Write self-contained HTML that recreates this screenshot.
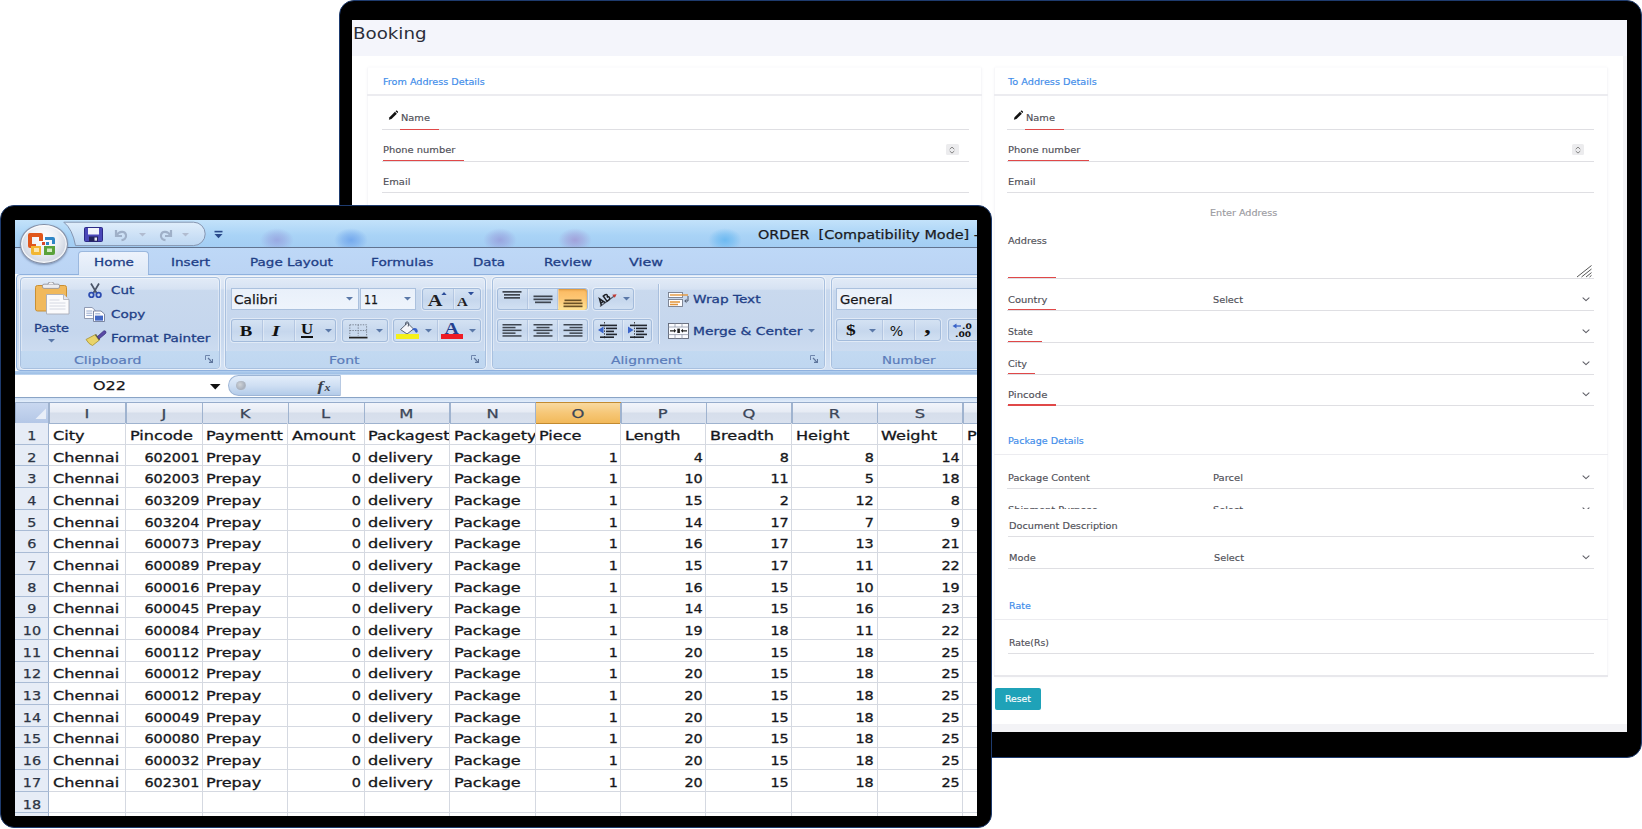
<!DOCTYPE html>
<html lang="en"><head><meta charset="utf-8"><title>Booking / Order import</title>
<style>
html,body{margin:0;padding:0}
body{width:1642px;height:829px;position:relative;overflow:hidden;background:#fff}
body div,body span.t,body svg{position:absolute;box-sizing:border-box}
span.t{white-space:pre;display:block}
</style></head>
<body>
<!-- booking monitor -->
<div style="left:338.8px;top:0.3px;width:1302.9px;height:757.7px;background:#000;border-radius:15px;border:1.8px solid #1e3b6e;"></div>
<div style="left:352px;top:20px;width:1275px;height:712px;background:#f3f3f6;"></div>
<div style="left:352px;top:20px;width:1271px;height:704px;background:#fff;"></div>
<div style="left:352px;top:509.5px;width:1275px;height:214.5px;background:#fff;"></div>
<div style="left:352px;top:20px;width:1275px;height:35.5px;background:#f4f5fb;"></div>
<span class="t" style="left:353.20px;top:22.99px;font:15.8px/21px 'DejaVu Sans','Liberation Sans',sans-serif;color:#2b2f3a;transform:scaleX(1.154);transform-origin:0 50%;">Booking</span>
<div style="left:367px;top:67px;width:614.5px;height:353px;background:#fff;border:1px solid #f7f7f9;border-top-color:#fcfcfd;border-radius:2px;box-shadow:0 0 3px rgba(60,60,90,.04);"></div>
<div style="left:367px;top:94.3px;width:614.5px;height:1.4px;background:#ececf0;"></div>
<span class="t" style="left:383.00px;top:75.67px;font:9.4px/12px 'DejaVu Sans','Liberation Sans',sans-serif;color:#3d8bea;transform:scaleX(1.027);transform-origin:0 50%;-webkit-text-stroke:.15px #3d8bea;">From Address Details</span>
<svg style="left:388.3px;top:109.6px;" width="10.4" height="10.4" viewBox="-0.5 -0.8 13 13"><path d="M0.6 11.4 L1.4 8.2 L8.2 1.4 L10.6 3.8 L3.8 10.6 Z" fill="#111"/><path d="M8.9 0.7 L9.7 -0.1 Q10.3 -0.5 10.9 0.1 L11.9 1.1 Q12.5 1.7 11.9 2.3 L11.3 3.1 Z" fill="#111"/></svg>
<span class="t" style="left:401.00px;top:111.67px;font:9.4px/12px 'DejaVu Sans','Liberation Sans',sans-serif;color:#505058;transform:scaleX(1.046);transform-origin:0 50%;-webkit-text-stroke:.15px #505058;">Name</span>
<div style="left:382px;top:129.1px;width:586.5px;height:1.2px;background:#dfdfe3;"></div>
<div style="left:400px;top:128.5px;width:39px;height:1.4px;background:#e04848;"></div>
<span class="t" style="left:383.00px;top:143.67px;font:9.4px/12px 'DejaVu Sans','Liberation Sans',sans-serif;color:#505058;transform:scaleX(1.054);transform-origin:0 50%;-webkit-text-stroke:.15px #505058;">Phone number</span>
<div style="left:382px;top:160.7px;width:586.5px;height:1.2px;background:#dfdfe3;"></div>
<div style="left:383px;top:160.1px;width:81px;height:1.4px;background:#e04848;"></div>
<div style="left:946px;top:144px;width:12.5px;height:11px;background:#ececee;border-radius:1.5px;"></div>
<svg style="left:949.2px;top:145.6px;" width="6" height="8" viewBox="0 0 6 8"><path d="M1 2.9 L3 1.1 L5 2.9 M1 5.3 L3 7.1 L5 5.3" fill="none" stroke="#777" stroke-width=".9" stroke-linecap="round" stroke-linejoin="round"/></svg>
<span class="t" style="left:383.00px;top:175.67px;font:9.4px/12px 'DejaVu Sans','Liberation Sans',sans-serif;color:#505058;transform:scaleX(1.054);transform-origin:0 50%;-webkit-text-stroke:.15px #505058;">Email</span>
<div style="left:382px;top:192.2px;width:586.5px;height:1.2px;background:#dfdfe3;"></div>
<div style="left:994px;top:67px;width:614px;height:609.5px;background:#fff;border:1px solid #f7f7f9;border-top-color:#fcfcfd;border-radius:2px;box-shadow:0 0 3px rgba(60,60,90,.04);"></div>
<div style="left:994px;top:94.3px;width:614px;height:1.4px;background:#ececf0;"></div>
<span class="t" style="left:1008.00px;top:75.67px;font:9.4px/12px 'DejaVu Sans','Liberation Sans',sans-serif;color:#3d8bea;transform:scaleX(1.036);transform-origin:0 50%;-webkit-text-stroke:.15px #3d8bea;">To Address Details</span>
<svg style="left:1013.3px;top:109.6px;" width="10.4" height="10.4" viewBox="-0.5 -0.8 13 13"><path d="M0.6 11.4 L1.4 8.2 L8.2 1.4 L10.6 3.8 L3.8 10.6 Z" fill="#111"/><path d="M8.9 0.7 L9.7 -0.1 Q10.3 -0.5 10.9 0.1 L11.9 1.1 Q12.5 1.7 11.9 2.3 L11.3 3.1 Z" fill="#111"/></svg>
<span class="t" style="left:1026.00px;top:111.67px;font:9.4px/12px 'DejaVu Sans','Liberation Sans',sans-serif;color:#505058;transform:scaleX(1.046);transform-origin:0 50%;-webkit-text-stroke:.15px #505058;">Name</span>
<div style="left:1007px;top:129.1px;width:587px;height:1.2px;background:#dfdfe3;"></div>
<div style="left:1025px;top:128.5px;width:39px;height:1.4px;background:#e04848;"></div>
<span class="t" style="left:1008.00px;top:143.67px;font:9.4px/12px 'DejaVu Sans','Liberation Sans',sans-serif;color:#505058;transform:scaleX(1.054);transform-origin:0 50%;-webkit-text-stroke:.15px #505058;">Phone number</span>
<div style="left:1007px;top:160.7px;width:587px;height:1.2px;background:#dfdfe3;"></div>
<div style="left:1008px;top:160.1px;width:81px;height:1.4px;background:#e04848;"></div>
<div style="left:1571.5px;top:144px;width:12.5px;height:11px;background:#ececee;border-radius:1.5px;"></div>
<svg style="left:1574.7px;top:145.6px;" width="6" height="8" viewBox="0 0 6 8"><path d="M1 2.9 L3 1.1 L5 2.9 M1 5.3 L3 7.1 L5 5.3" fill="none" stroke="#777" stroke-width=".9" stroke-linecap="round" stroke-linejoin="round"/></svg>
<span class="t" style="left:1008.00px;top:175.67px;font:9.4px/12px 'DejaVu Sans','Liberation Sans',sans-serif;color:#505058;transform:scaleX(1.054);transform-origin:0 50%;-webkit-text-stroke:.15px #505058;">Email</span>
<div style="left:1007px;top:192.2px;width:587px;height:1.2px;background:#dfdfe3;"></div>
<span class="t" style="left:1209.50px;top:207.17px;font:9.4px/12px 'DejaVu Sans','Liberation Sans',sans-serif;color:#9a9aa0;transform:scaleX(1.028);transform-origin:0 50%;-webkit-text-stroke:.15px #9a9aa0;">Enter Address</span>
<span class="t" style="left:1008.00px;top:234.67px;font:9.4px/12px 'DejaVu Sans','Liberation Sans',sans-serif;color:#505058;transform:scaleX(1.042);transform-origin:0 50%;-webkit-text-stroke:.15px #505058;">Address</span>
<div style="left:1007px;top:277.6px;width:587px;height:1.2px;background:#dfdfe3;"></div>
<div style="left:1008px;top:276.7px;width:48px;height:1.4px;background:#e04848;"></div>
<svg style="left:1576px;top:264px;" width="17" height="14" viewBox="0 0 17 14"><path d="M1 13 L15.5 1.5 M5.5 13 L15.5 5 M10 13 L15.5 8.6 M13.6 13 L15.5 11.4" stroke="#555" stroke-width="1" fill="none"/></svg>
<span class="t" style="left:1008.00px;top:293.67px;font:9.4px/12px 'DejaVu Sans','Liberation Sans',sans-serif;color:#505058;transform:scaleX(1.058);transform-origin:0 50%;-webkit-text-stroke:.15px #505058;">Country</span>
<span class="t" style="left:1212.50px;top:293.67px;font:9.4px/12px 'DejaVu Sans','Liberation Sans',sans-serif;color:#505058;transform:scaleX(1.035);transform-origin:0 50%;-webkit-text-stroke:.15px #505058;">Select</span>
<div style="left:1007px;top:309.7px;width:587px;height:1.2px;background:#dfdfe3;"></div>
<div style="left:1008px;top:308.9px;width:48px;height:1.4px;background:#e04848;"></div>
<svg style="left:1582.4px;top:296.8px;" width="8" height="5" viewBox="0 0 8 5"><path d="M1 0.9 L4 3.7 L7 0.9" fill="none" stroke="#5e5e66" stroke-width="1.05" stroke-linecap="round" stroke-linejoin="round"/></svg>
<span class="t" style="left:1008.00px;top:325.67px;font:9.4px/12px 'DejaVu Sans','Liberation Sans',sans-serif;color:#505058;-webkit-text-stroke:.15px #505058;">State</span>
<div style="left:1007px;top:341.7px;width:587px;height:1.2px;background:#dfdfe3;"></div>
<div style="left:1008px;top:340.9px;width:33.8px;height:1.4px;background:#e04848;"></div>
<svg style="left:1582.4px;top:328.8px;" width="8" height="5" viewBox="0 0 8 5"><path d="M1 0.9 L4 3.7 L7 0.9" fill="none" stroke="#5e5e66" stroke-width="1.05" stroke-linecap="round" stroke-linejoin="round"/></svg>
<span class="t" style="left:1008.00px;top:357.67px;font:9.4px/12px 'DejaVu Sans','Liberation Sans',sans-serif;color:#505058;transform:scaleX(1.031);transform-origin:0 50%;-webkit-text-stroke:.15px #505058;">City</span>
<div style="left:1007px;top:373.7px;width:587px;height:1.2px;background:#dfdfe3;"></div>
<div style="left:1008px;top:372.9px;width:27px;height:1.4px;background:#e04848;"></div>
<svg style="left:1582.4px;top:360.8px;" width="8" height="5" viewBox="0 0 8 5"><path d="M1 0.9 L4 3.7 L7 0.9" fill="none" stroke="#5e5e66" stroke-width="1.05" stroke-linecap="round" stroke-linejoin="round"/></svg>
<span class="t" style="left:1008.00px;top:389.17px;font:9.4px/12px 'DejaVu Sans','Liberation Sans',sans-serif;color:#505058;transform:scaleX(1.076);transform-origin:0 50%;-webkit-text-stroke:.15px #505058;">Pincode</span>
<div style="left:1007px;top:405.2px;width:587px;height:1.2px;background:#dfdfe3;"></div>
<div style="left:1008px;top:404.4px;width:48px;height:1.4px;background:#e04848;"></div>
<svg style="left:1582.4px;top:392.3px;" width="8" height="5" viewBox="0 0 8 5"><path d="M1 0.9 L4 3.7 L7 0.9" fill="none" stroke="#5e5e66" stroke-width="1.05" stroke-linecap="round" stroke-linejoin="round"/></svg>
<span class="t" style="left:1008.00px;top:435.47px;font:9.4px/12px 'DejaVu Sans','Liberation Sans',sans-serif;color:#3d8bea;transform:scaleX(1.020);transform-origin:0 50%;-webkit-text-stroke:.15px #3d8bea;">Package Details</span>
<div style="left:994px;top:453.9px;width:614px;height:1.4px;background:#ececf0;"></div>
<span class="t" style="left:1008.00px;top:472.17px;font:9.4px/12px 'DejaVu Sans','Liberation Sans',sans-serif;color:#505058;transform:scaleX(1.034);transform-origin:0 50%;-webkit-text-stroke:.15px #505058;">Package Content</span>
<span class="t" style="left:1212.50px;top:472.17px;font:9.4px/12px 'DejaVu Sans','Liberation Sans',sans-serif;color:#505058;transform:scaleX(1.063);transform-origin:0 50%;-webkit-text-stroke:.15px #505058;">Parcel</span>
<div style="left:1007px;top:488.2px;width:587px;height:1.2px;background:#dfdfe3;"></div>
<svg style="left:1582.4px;top:475.3px;" width="8" height="5" viewBox="0 0 8 5"><path d="M1 0.9 L4 3.7 L7 0.9" fill="none" stroke="#5e5e66" stroke-width="1.05" stroke-linecap="round" stroke-linejoin="round"/></svg>
<div style="left:1000px;top:500px;width:600px;height:8.8px;overflow:hidden">
<span class="t" style="left:8.00px;top:3.87px;font:9.4px/12px 'DejaVu Sans','Liberation Sans',sans-serif;color:#505058;transform:scaleX(1.049);transform-origin:0 50%;-webkit-text-stroke:.15px #505058;">Shipment Purpose</span>
<span class="t" style="left:212.50px;top:3.87px;font:9.4px/12px 'DejaVu Sans','Liberation Sans',sans-serif;color:#505058;transform:scaleX(1.035);transform-origin:0 50%;-webkit-text-stroke:.15px #505058;">Select</span>
<svg style="left:582.4px;top:7px;" width="8" height="5" viewBox="0 0 8 5"><path d="M1 0.9 L4 3.7 L7 0.9" fill="none" stroke="#5e5e66" stroke-width="1.05" stroke-linecap="round" stroke-linejoin="round"/></svg>
</div>
<span class="t" style="left:1009.00px;top:519.67px;font:9.4px/12px 'DejaVu Sans','Liberation Sans',sans-serif;color:#505058;transform:scaleX(1.036);transform-origin:0 50%;-webkit-text-stroke:.15px #505058;">Document Description</span>
<div style="left:1008px;top:535.7px;width:586px;height:1.2px;background:#dfdfe3;"></div>
<span class="t" style="left:1009.00px;top:552.17px;font:9.4px/12px 'DejaVu Sans','Liberation Sans',sans-serif;color:#505058;transform:scaleX(1.046);transform-origin:0 50%;-webkit-text-stroke:.15px #505058;">Mode</span>
<span class="t" style="left:1213.50px;top:552.17px;font:9.4px/12px 'DejaVu Sans','Liberation Sans',sans-serif;color:#505058;transform:scaleX(1.035);transform-origin:0 50%;-webkit-text-stroke:.15px #505058;">Select</span>
<div style="left:1008px;top:568.2px;width:586px;height:1.2px;background:#dfdfe3;"></div>
<svg style="left:1582.4px;top:555.3px;" width="8" height="5" viewBox="0 0 8 5"><path d="M1 0.9 L4 3.7 L7 0.9" fill="none" stroke="#5e5e66" stroke-width="1.05" stroke-linecap="round" stroke-linejoin="round"/></svg>
<span class="t" style="left:1009.00px;top:600.17px;font:9.4px/12px 'DejaVu Sans','Liberation Sans',sans-serif;color:#3d8bea;transform:scaleX(1.011);transform-origin:0 50%;-webkit-text-stroke:.15px #3d8bea;">Rate</span>
<div style="left:994px;top:618.6px;width:614px;height:1.4px;background:#ececf0;"></div>
<span class="t" style="left:1009.00px;top:637.17px;font:9.4px/12px 'DejaVu Sans','Liberation Sans',sans-serif;color:#505058;transform:scaleX(0.992);transform-origin:0 50%;-webkit-text-stroke:.15px #505058;">Rate(Rs)</span>
<div style="left:1008px;top:653.2px;width:586px;height:1.2px;background:#dfdfe3;"></div>
<div style="left:994px;top:675.2px;width:614px;height:1.6px;background:#e8e8ec;"></div>
<div style="left:994.5px;top:688px;width:46px;height:22px;background:#1fa2b8;border-radius:2px;"></div>
<span class="t" style="left:1005.00px;top:692.97px;font:9.4px/12px 'DejaVu Sans','Liberation Sans',sans-serif;color:#fff;transform:scaleX(0.990);transform-origin:0 50%;-webkit-text-stroke:.15px #fff;">Reset</span>
<!-- excel monitor -->
<div style="left:0.3px;top:205.3px;width:991.4px;height:623.2px;background:#000;border-radius:14px;border:1.8px solid #1e3b6e;"></div>
<div style="left:15px;top:220px;width:962px;height:596px;overflow:hidden;background:#fff">
<div style="left:0px;top:0px;width:962px;height:28px;background:linear-gradient(#c3e2fa,#a9d3f6 55%,#a3cdf3);"></div>
<div style="left:245px;top:8px;width:34px;height:24px;background:radial-gradient(ellipse at center,rgba(150,160,222,.8),rgba(150,160,222,.45) 35%,rgba(150,160,222,0) 70%);"></div>
<div style="left:319px;top:8px;width:34px;height:24px;background:radial-gradient(ellipse at center,rgba(105,160,235,.8),rgba(105,160,235,.45) 35%,rgba(105,160,235,0) 70%);"></div>
<div style="left:468px;top:8px;width:34px;height:24px;background:radial-gradient(ellipse at center,rgba(150,155,218,.8),rgba(150,155,218,.45) 35%,rgba(150,155,218,0) 70%);"></div>
<div style="left:543px;top:8px;width:34px;height:24px;background:radial-gradient(ellipse at center,rgba(160,150,212,.8),rgba(160,150,212,.45) 35%,rgba(160,150,212,0) 70%);"></div>
<div style="left:693px;top:8px;width:34px;height:24px;background:radial-gradient(ellipse at center,rgba(95,180,240,.8),rgba(95,180,240,.45) 35%,rgba(95,180,240,0) 70%);"></div>
<div style="left:0px;top:27.2px;width:962px;height:1.2px;background:#61738f;"></div>
<div style="left:0px;top:28.4px;width:962px;height:26px;background:linear-gradient(#bed8f7,#bbd4f4);"></div>
<svg style="left:45px;top:0px;" width="150" height="28" viewBox="0 0 150 28"><defs><linearGradient id="qg" x1="0" y1="0" x2="0" y2="1"><stop offset="0" stop-color="#e6f0fb" stop-opacity=".85"/><stop offset="1" stop-color="#c3d9f2" stop-opacity=".85"/></linearGradient></defs><path d="M3.8 2.2 Q12.5 9 15.5 25.6 H133.5 A11.7 11.7 0 0 0 133.5 2.2 Z" fill="url(#qg)" stroke="#8595b0" stroke-width="1"/></svg>
<div style="left:4.5px;top:3.7px;width:48px;height:40.6px;border-radius:50%;background:radial-gradient(ellipse at 50% 35%,#ffffff 0,#eceff5 42%,#c9d0dd 78%,#a9b3c6 100%);border:1.4px solid #8590a6;box-shadow:0 1px 2px rgba(60,80,120,.5),inset 0 0 0 1.5px rgba(255,255,255,.7);"></div>
<svg style="left:12.5px;top:11px;" width="32" height="26" viewBox="0 0 32 26"><path d="M2 2 h11 a2 2 0 0 1 2 2 v6 h-4 v-4 h-7 v7 h4 v4 h-6 a2 2 0 0 1 -2 -2 v-11 a2 2 0 0 1 2 -2z" fill="#e0561b"/><path d="M17 6 h8 a2 2 0 0 1 2 2 v5 h-3 v-4 h-7z" fill="#2f86c6"/><rect x="14" y="11" width="3" height="3" fill="#d9482b"/><rect x="18" y="11" width="3" height="3" fill="#2f86c6"/><path d="M3 15 h10 v9 h-8 a2 2 0 0 1 -2 -2z" fill="#f2b632"/><path d="M6 17 h5 v4 h-5z" fill="#fbe6ae"/><path d="M16 15 h11 v7 a2 2 0 0 1 -2 2 h-9z" fill="#5aa23a"/><path d="M19 17.5 h5 v3.5 h-5z" fill="#d3ebc2"/></svg>
<svg style="left:69px;top:7px;" width="19" height="15" viewBox="0 0 19 15"><rect x="0.5" y="0.5" width="18" height="14" rx="1" fill="#4a47b8" stroke="#2c2a86"/><rect x="4" y="1" width="11" height="6.5" fill="#f2f4fb"/><rect x="5" y="9.5" width="9" height="5" fill="#23235c"/><rect x="10.5" y="10.5" width="2.5" height="3.2" fill="#e8e8f2"/></svg>
<svg style="left:98px;top:7px;" width="17" height="15" viewBox="0 0 17 15"><path d="M3 3 v6 h6 M3.5 8.5 C6 4 12 3.5 13 8 C13.6 11 11 13 8.5 13.2" fill="none" stroke="#9fb0c8" stroke-width="2.2"/></svg>
<svg style="left:142px;top:7px;" width="17" height="15" viewBox="0 0 17 15"><path d="M14 3 v6 h-6 M13.5 8.5 C11 4 5 3.5 4 8 C3.4 11 6 13 8.5 13.2" fill="none" stroke="#9fb0c8" stroke-width="2.2"/></svg>
<svg style="left:123.5px;top:13px;" width="7" height="4" viewBox="0 0 7 4"><path d="M0 0 h7 l-3.5 3.6z" fill="#b1bcd0"/></svg>
<svg style="left:166.5px;top:13px;" width="7" height="4" viewBox="0 0 7 4"><path d="M0 0 h7 l-3.5 3.6z" fill="#b1bcd0"/></svg>
<svg style="left:198.5px;top:9.5px;" width="9" height="9" viewBox="0 0 9 9"><rect x="0.5" y="0.8" width="8" height="1.6" fill="#2a4a8a"/><path d="M0.5 4 h8 l-4 4.2z" fill="#2a4a8a"/></svg>
<span class="t" style="left:743.00px;top:6.04px;font:13px/17px 'DejaVu Sans','Liberation Sans',sans-serif;color:#1b1b1f;transform:scaleX(1.106);transform-origin:0 50%;-webkit-text-stroke:.25px #16161a;">ORDER  [Compatibility Mode] -</span>
<div style="left:63px;top:30.6px;width:71px;height:25px;border:1px solid #9bb8de;border-bottom:none;border-radius:4px 4px 0 0;background:linear-gradient(#edf3fc,#e3ecf8 60%,#dde8f6);"></div>
<span class="t" style="left:79.00px;top:35.31px;font:11.2px/15px 'DejaVu Sans','Liberation Sans',sans-serif;color:#1f3f87;transform:scaleX(1.209);transform-origin:0 50%;-webkit-text-stroke:.3px #1f3f87;">Home</span>
<span class="t" style="left:156.00px;top:35.31px;font:11.2px/15px 'DejaVu Sans','Liberation Sans',sans-serif;color:#1f3f87;transform:scaleX(1.214);transform-origin:0 50%;-webkit-text-stroke:.3px #1f3f87;">Insert</span>
<span class="t" style="left:235.00px;top:35.31px;font:11.2px/15px 'DejaVu Sans','Liberation Sans',sans-serif;color:#1f3f87;transform:scaleX(1.207);transform-origin:0 50%;-webkit-text-stroke:.3px #1f3f87;">Page Layout</span>
<span class="t" style="left:355.50px;top:35.31px;font:11.2px/15px 'DejaVu Sans','Liberation Sans',sans-serif;color:#1f3f87;transform:scaleX(1.223);transform-origin:0 50%;-webkit-text-stroke:.3px #1f3f87;">Formulas</span>
<span class="t" style="left:458.00px;top:35.31px;font:11.2px/15px 'DejaVu Sans','Liberation Sans',sans-serif;color:#1f3f87;transform:scaleX(1.197);transform-origin:0 50%;-webkit-text-stroke:.3px #1f3f87;">Data</span>
<span class="t" style="left:529.00px;top:35.31px;font:11.2px/15px 'DejaVu Sans','Liberation Sans',sans-serif;color:#1f3f87;transform:scaleX(1.201);transform-origin:0 50%;-webkit-text-stroke:.3px #1f3f87;">Review</span>
<span class="t" style="left:614.00px;top:35.31px;font:11.2px/15px 'DejaVu Sans','Liberation Sans',sans-serif;color:#1f3f87;transform:scaleX(1.279);transform-origin:0 50%;-webkit-text-stroke:.3px #1f3f87;">View</span>
<div style="left:0.5px;top:54.2px;width:965px;height:96.6px;border:1px solid #8fb1de;border-radius:4px;background:linear-gradient(#e1eaf6 0,#d9e4f3 14%,#c9d9ee 16%,#c5d6ed 60%,#d3e1f3 100%);"></div>
<div style="left:64px;top:54px;width:69.4px;height:1.6px;background:#dde8f6;"></div>
<div style="left:4.5px;top:57px;width:200px;height:92px;border:1px solid #a8c0df;border-radius:4px;box-shadow:0 0 0 1px rgba(255,255,255,.55),inset 0 0 0 1px rgba(255,255,255,.35);background:linear-gradient(rgba(226,235,247,.9) 0,rgba(214,226,243,.8) 12%,rgba(201,217,238,0) 14%);overflow:hidden;"><div style="left:0;top:72.5px;width:100%;height:19px;background:linear-gradient(#c2d9f1,#bfd6f0)"></div></div>
<span class="t" style="left:59.40px;top:132.61px;font:11.2px/15px 'DejaVu Sans','Liberation Sans',sans-serif;color:#5b7cba;transform:scaleX(1.264);transform-origin:0 50%;-webkit-text-stroke:.2px #5b7cba;">Clipboard</span>
<svg style="left:190px;top:135px;" width="8" height="8" viewBox="0 0 8 8"><path d="M0.5 5 V0.5 H5" fill="none" stroke="#6f86ad" stroke-width="1"/><path d="M3 3 L7.5 7.5 M7.5 4 V7.5 H4" fill="none" stroke="#5f769d" stroke-width="1.3"/></svg>
<div style="left:210px;top:57px;width:260.6px;height:92px;border:1px solid #a8c0df;border-radius:4px;box-shadow:0 0 0 1px rgba(255,255,255,.55),inset 0 0 0 1px rgba(255,255,255,.35);background:linear-gradient(rgba(226,235,247,.9) 0,rgba(214,226,243,.8) 12%,rgba(201,217,238,0) 14%);overflow:hidden;"><div style="left:0;top:72.5px;width:100%;height:19px;background:linear-gradient(#c2d9f1,#bfd6f0)"></div></div>
<span class="t" style="left:313.80px;top:132.61px;font:11.2px/15px 'DejaVu Sans','Liberation Sans',sans-serif;color:#5b7cba;transform:scaleX(1.255);transform-origin:0 50%;-webkit-text-stroke:.2px #5b7cba;">Font</span>
<svg style="left:456.1px;top:135px;" width="8" height="8" viewBox="0 0 8 8"><path d="M0.5 5 V0.5 H5" fill="none" stroke="#6f86ad" stroke-width="1"/><path d="M3 3 L7.5 7.5 M7.5 4 V7.5 H4" fill="none" stroke="#5f769d" stroke-width="1.3"/></svg>
<div style="left:477px;top:57px;width:332.5px;height:92px;border:1px solid #a8c0df;border-radius:4px;box-shadow:0 0 0 1px rgba(255,255,255,.55),inset 0 0 0 1px rgba(255,255,255,.35);background:linear-gradient(rgba(226,235,247,.9) 0,rgba(214,226,243,.8) 12%,rgba(201,217,238,0) 14%);overflow:hidden;"><div style="left:0;top:72.5px;width:100%;height:19px;background:linear-gradient(#c2d9f1,#bfd6f0)"></div></div>
<span class="t" style="left:596.00px;top:132.61px;font:11.2px/15px 'DejaVu Sans','Liberation Sans',sans-serif;color:#5b7cba;transform:scaleX(1.237);transform-origin:0 50%;-webkit-text-stroke:.2px #5b7cba;">Alignment</span>
<svg style="left:795px;top:135px;" width="8" height="8" viewBox="0 0 8 8"><path d="M0.5 5 V0.5 H5" fill="none" stroke="#6f86ad" stroke-width="1"/><path d="M3 3 L7.5 7.5 M7.5 4 V7.5 H4" fill="none" stroke="#5f769d" stroke-width="1.3"/></svg>
<div style="left:816px;top:57px;width:179px;height:92px;border:1px solid #a8c0df;border-radius:4px;box-shadow:0 0 0 1px rgba(255,255,255,.55),inset 0 0 0 1px rgba(255,255,255,.35);background:linear-gradient(rgba(226,235,247,.9) 0,rgba(214,226,243,.8) 12%,rgba(201,217,238,0) 14%);overflow:hidden;"><div style="left:0;top:72.5px;width:100%;height:19px;background:linear-gradient(#c2d9f1,#bfd6f0)"></div></div>
<span class="t" style="left:867.00px;top:132.61px;font:11.2px/15px 'DejaVu Sans','Liberation Sans',sans-serif;color:#5b7cba;transform:scaleX(1.191);transform-origin:0 50%;-webkit-text-stroke:.2px #5b7cba;">Number</span>
<svg style="left:20px;top:61.5px;" width="35" height="33" viewBox="0 0 35 33"><rect x="0.5" y="3.5" width="31" height="25.5" rx="2" fill="#f1b95c" stroke="#c98f33"/><rect x="7.5" y="2.2" width="17" height="4.2" rx="1.5" fill="#ececf0" stroke="#8c8c94" stroke-width=".8"/><path d="M13 2.2 a3 2.4 0 0 1 6 0" fill="#f4f4f6" stroke="#8c8c94" stroke-width=".9"/><path d="M11.5 12.5 h17 l5.5 5 v14.5 h-22.5z" fill="#fbfbfd" stroke="#a9adb8" stroke-width=".9"/><path d="M28.5 12.5 v5 h5.5" fill="#e4e6ee" stroke="#a9adb8" stroke-width=".8"/><path d="M14.5 18 h10 M14.5 21 h16 M14.5 24 h16 M14.5 27 h16" stroke="#d5d8e2" stroke-width="1"/></svg>
<span class="t" style="left:19.40px;top:100.61px;font:11.2px/15px 'DejaVu Sans','Liberation Sans',sans-serif;color:#1f3f87;transform:scaleX(1.158);transform-origin:0 50%;-webkit-text-stroke:.3px #1f3f87;">Paste</span>
<svg style="left:32.5px;top:119px;" width="7" height="4" viewBox="0 0 7 4"><path d="M0 0 h7 l-3.5 3.6z" fill="#5a78a8"/></svg>
<svg style="left:72.5px;top:62.5px;" width="14" height="15.5" viewBox="0 0 14 15.5"><path d="M3 0.5 L8.6 10 M11 0.5 L5.4 10" stroke="#4a5468" stroke-width="1.7" fill="none"/><circle cx="3.4" cy="12" r="2.3" fill="none" stroke="#2b4bb0" stroke-width="1.8"/><circle cx="10.6" cy="12" r="2.3" fill="none" stroke="#2b4bb0" stroke-width="1.8"/></svg>
<span class="t" style="left:95.60px;top:63.11px;font:11.2px/15px 'DejaVu Sans','Liberation Sans',sans-serif;color:#1f3f87;transform:scaleX(1.201);transform-origin:0 50%;-webkit-text-stroke:.3px #1f3f87;">Cut</span>
<svg style="left:69px;top:86.5px;" width="22" height="15" viewBox="0 0 22 15"><path d="M0.5 0.5 h7.5 l3 2.6 v8.4 h-10.5z" fill="#fdfdff" stroke="#8792ab" stroke-width=".9"/><path d="M2.3 4 h6 M2.3 6.2 h6 M2.3 8.4 h6" stroke="#8aa0c8" stroke-width=".9"/><path d="M9.5 4 h7.5 l3.5 3 v7.5 h-11z" fill="#fdfdff" stroke="#6f7c9a" stroke-width=".9"/><rect x="11" y="8.6" width="8" height="5" fill="#4368c4"/><path d="M11.2 6.8 h5" stroke="#8aa0c8" stroke-width=".9"/></svg>
<span class="t" style="left:95.60px;top:87.01px;font:11.2px/15px 'DejaVu Sans','Liberation Sans',sans-serif;color:#1f3f87;transform:scaleX(1.211);transform-origin:0 50%;-webkit-text-stroke:.3px #1f3f87;">Copy</span>
<svg style="left:70px;top:110px;" width="22" height="16" viewBox="0 0 22 16"><path d="M1 9.5 L10.5 4.5 L14.5 10 L7.5 15.5 Q4 14.5 1 9.5z" fill="#e9d46a" stroke="#a7902f" stroke-width=".8"/><path d="M10.5 4.5 L14.5 10" stroke="#6a6a4a" stroke-width="1.6"/><path d="M12.4 6.6 L18.6 1 Q20.6 0.2 21 2 Q21.2 3.2 20 4 L14 9z" fill="#5a4aa6" stroke="#3a2f7a" stroke-width=".7"/></svg>
<span class="t" style="left:95.60px;top:110.51px;font:11.2px/15px 'DejaVu Sans','Liberation Sans',sans-serif;color:#1f3f87;transform:scaleX(1.209);transform-origin:0 50%;-webkit-text-stroke:.3px #1f3f87;">Format Painter</span>
<div style="left:215.6px;top:68px;width:128.4px;height:22.3px;border:1px solid #abc1de;background:linear-gradient(#e9f0fa,#eef4fc);"></div>
<span class="t" style="left:219.40px;top:70.74px;font:13px/17px 'DejaVu Sans','Liberation Sans',sans-serif;color:#16161a;transform:scaleX(1.051);transform-origin:0 50%;-webkit-text-stroke:.25px #16161a;">Calibri</span>
<svg style="left:331.3px;top:77px;" width="7" height="4" viewBox="0 0 7 4"><path d="M0 0 h7 l-3.5 3.6z" fill="#5a78a8"/></svg>
<div style="left:345.4px;top:68px;width:55.6px;height:22.3px;border:1px solid #abc1de;background:linear-gradient(#e9f0fa,#eef4fc);"></div>
<span class="t" style="left:349.00px;top:70.74px;font:13px/17px 'DejaVu Sans','Liberation Sans',sans-serif;color:#16161a;transform:scaleX(0.846);transform-origin:0 50%;-webkit-text-stroke:.25px #16161a;">11</span>
<svg style="left:389px;top:77px;" width="7" height="4" viewBox="0 0 7 4"><path d="M0 0 h7 l-3.5 3.6z" fill="#5a78a8"/></svg>
<div style="left:407px;top:68px;width:58.6px;height:22.3px;border:1px solid #a3bbdb;border-radius:3px;background:linear-gradient(#d4e2f3,#c6d7ed 55%,#d1e0f2);box-shadow:0 0 0 1px rgba(255,255,255,.45);"></div>
<div style="left:437.5px;top:69px;width:1px;height:20.3px;background:rgba(170,190,220,.7);box-shadow:1px 0 0 rgba(255,255,255,.35);"></div>
<span class="t" style="left:414.46px;top:69.73px;font:17px/22px 'Liberation Serif',serif;font-weight:700;color:#1f1f24;transform:scaleX(1.200);transform-origin:50% 50%;">A</span>
<span class="t" style="left:443.49px;top:74.37px;font:12.5px/16px 'Liberation Serif',serif;font-weight:700;color:#1f1f24;transform:scaleX(1.200);transform-origin:50% 50%;">A</span>
<svg style="left:426px;top:71.5px;" width="6" height="3.4" viewBox="0 0 6 3.4"><path d="M0 3.4 h6 l-3 -3.4z" fill="#2b4d9a"/></svg>
<svg style="left:453px;top:72px;" width="6" height="3.4" viewBox="0 0 6 3.4"><path d="M0 0 h6 l-3 3.4z" fill="#2b4d9a"/></svg>
<div style="left:215.6px;top:99.4px;width:105.4px;height:22.6px;border:1px solid #a3bbdb;border-radius:3px;background:linear-gradient(#d4e2f3,#c6d7ed 55%,#d1e0f2);box-shadow:0 0 0 1px rgba(255,255,255,.45);"></div>
<div style="left:246.5px;top:100.4px;width:1px;height:20.6px;background:rgba(170,190,220,.7);box-shadow:1px 0 0 rgba(255,255,255,.35);"></div>
<div style="left:278.5px;top:100.4px;width:1px;height:20.6px;background:rgba(170,190,220,.7);box-shadow:1px 0 0 rgba(255,255,255,.35);"></div>
<span class="t" style="left:225.60px;top:100.75px;font:15px/20px 'Liberation Serif',serif;font-weight:700;color:#111;transform:scaleX(1.250);transform-origin:50% 50%;">B</span>
<span class="t" style="left:258.08px;top:100.75px;font:15px/20px 'Liberation Serif',serif;font-weight:700;font-style:italic;color:#111;transform:scaleX(1.400);transform-origin:50% 50%;">I</span>
<span class="t" style="left:286.94px;top:101.16px;font:14px/18px 'Liberation Serif',serif;font-weight:700;color:#111;transform:scaleX(1.200);transform-origin:50% 50%;">U</span>
<div style="left:286px;top:116.3px;width:12px;height:1.3px;background:#111;"></div>
<svg style="left:309.5px;top:108.5px;" width="7" height="4" viewBox="0 0 7 4"><path d="M0 0 h7 l-3.5 3.6z" fill="#5a78a8"/></svg>
<div style="left:327px;top:99.4px;width:45.5px;height:22.6px;border:1px solid #a3bbdb;border-radius:3px;background:linear-gradient(#d4e2f3,#c6d7ed 55%,#d1e0f2);box-shadow:0 0 0 1px rgba(255,255,255,.45);"></div>
<svg style="left:334px;top:103.5px;" width="18.5" height="15" viewBox="0 0 18.5 15"><path d="M0.8 0.8 h16.8 v11 M0.8 0.8 v11 M9.2 0.8 v11 M0.8 6.5 h16.8" fill="none" stroke="#7d8796" stroke-width="1" stroke-dasharray="1.4 1.2"/><path d="M0 13.6 h18.5" stroke="#222" stroke-width="1.7"/></svg>
<svg style="left:360.5px;top:108.5px;" width="7" height="4" viewBox="0 0 7 4"><path d="M0 0 h7 l-3.5 3.6z" fill="#5a78a8"/></svg>
<div style="left:377.5px;top:99.4px;width:88.1px;height:22.6px;border:1px solid #a3bbdb;border-radius:3px;background:linear-gradient(#d4e2f3,#c6d7ed 55%,#d1e0f2);box-shadow:0 0 0 1px rgba(255,255,255,.45);"></div>
<div style="left:421.5px;top:100.4px;width:1px;height:20.6px;background:rgba(170,190,220,.7);box-shadow:1px 0 0 rgba(255,255,255,.35);"></div>
<svg style="left:383px;top:101px;" width="21" height="14" viewBox="0 0 21 14"><path d="M2.5 8.5 L9.5 2 L15.5 8 L9 13z" fill="#f6f7fb" stroke="#5b6474" stroke-width="1"/><path d="M7.5 4 Q7 0.5 9.5 0.8 Q11.5 1.2 10.2 5.5" fill="none" stroke="#4c5566" stroke-width="1"/><path d="M15.5 7.2 Q19.5 6.5 19.8 10.5 Q18.5 13 17 10.5 Q16.6 8.6 13.5 9.2z" fill="#3a63c8"/></svg>
<div style="left:381px;top:114.4px;width:22.5px;height:5px;background:#f4f01a;"></div>
<svg style="left:410px;top:108.5px;" width="7" height="4" viewBox="0 0 7 4"><path d="M0 0 h7 l-3.5 3.6z" fill="#5a78a8"/></svg>
<span class="t" style="left:431.22px;top:98.24px;font:16px/21px 'Liberation Serif',serif;font-weight:700;color:#24408f;transform:scaleX(1.250);transform-origin:50% 50%;">A</span>
<div style="left:426px;top:114.4px;width:21.8px;height:5px;background:#ee1c25;"></div>
<svg style="left:454px;top:108.5px;" width="7" height="4" viewBox="0 0 7 4"><path d="M0 0 h7 l-3.5 3.6z" fill="#5a78a8"/></svg>
<div style="left:482px;top:68px;width:90.5px;height:22.3px;border:1px solid #a3bbdb;border-radius:3px;background:linear-gradient(#d4e2f3,#c6d7ed 55%,#d1e0f2);box-shadow:0 0 0 1px rgba(255,255,255,.45);"></div>
<div style="left:542.5px;top:68.5px;width:29.5px;height:21.3px;background:linear-gradient(#fbb961,#fdc774 45%,#ffe596);border-radius:0 3px 3px 0;box-shadow:inset 0 1px 2px rgba(190,120,30,.6);"></div>
<div style="left:511.5px;top:69px;width:1px;height:20.3px;background:rgba(170,190,220,.7);box-shadow:1px 0 0 rgba(255,255,255,.35);"></div>
<div style="left:542px;top:69px;width:1px;height:20.3px;background:rgba(170,190,220,.7);box-shadow:1px 0 0 rgba(255,255,255,.35);"></div>
<svg style="left:487px;top:70px;" width="24" height="20" viewBox="0 0 24 20"><rect x="0.5" y="1" width="19" height="1.7" fill="#3f4650"/><rect x="2" y="4" width="16" height="1.7" fill="#3f4650"/><rect x="2" y="7" width="16" height="1.7" fill="#3f4650"/></svg>
<svg style="left:517.5px;top:70px;" width="24" height="20" viewBox="0 0 24 20"><rect x="0.5" y="5.5" width="19" height="1.7" fill="#3f4650"/><rect x="0.5" y="8.5" width="19" height="1.7" fill="#3f4650"/><rect x="2" y="11.5" width="16" height="1.7" fill="#3f4650"/></svg>
<svg style="left:548px;top:70px;" width="24" height="20" viewBox="0 0 24 20"><rect x="1.5" y="9.5" width="17" height="1.7" fill="#6b5226"/><rect x="0.5" y="12.5" width="19" height="1.7" fill="#6b5226"/><rect x="0.5" y="15.5" width="19" height="1.7" fill="#6b5226"/></svg>
<div style="left:482px;top:99.4px;width:90.5px;height:22.6px;border:1px solid #a3bbdb;border-radius:3px;background:linear-gradient(#d4e2f3,#c6d7ed 55%,#d1e0f2);box-shadow:0 0 0 1px rgba(255,255,255,.45);"></div>
<div style="left:511.5px;top:100.4px;width:1px;height:20.6px;background:rgba(170,190,220,.7);box-shadow:1px 0 0 rgba(255,255,255,.35);"></div>
<div style="left:542px;top:100.4px;width:1px;height:20.6px;background:rgba(170,190,220,.7);box-shadow:1px 0 0 rgba(255,255,255,.35);"></div>
<svg style="left:487px;top:101px;" width="24" height="20" viewBox="0 0 24 20"><rect x="0.5" y="3" width="19" height="1.5" fill="#3f4650"/><rect x="0.5" y="5.8" width="13" height="1.5" fill="#3f4650"/><rect x="0.5" y="8.6" width="19" height="1.5" fill="#3f4650"/><rect x="0.5" y="11.4" width="13" height="1.5" fill="#3f4650"/><rect x="0.5" y="14.2" width="19" height="1.5" fill="#3f4650"/></svg>
<svg style="left:517.5px;top:101px;" width="24" height="20" viewBox="0 0 24 20"><rect x="0.5" y="3" width="19" height="1.5" fill="#3f4650"/><rect x="3.5" y="5.8" width="13" height="1.5" fill="#3f4650"/><rect x="0.5" y="8.6" width="19" height="1.5" fill="#3f4650"/><rect x="3.5" y="11.4" width="13" height="1.5" fill="#3f4650"/><rect x="0.5" y="14.2" width="19" height="1.5" fill="#3f4650"/></svg>
<svg style="left:548px;top:101px;" width="24" height="20" viewBox="0 0 24 20"><rect x="0.5" y="3" width="19" height="1.5" fill="#3f4650"/><rect x="6.5" y="5.8" width="13" height="1.5" fill="#3f4650"/><rect x="0.5" y="8.6" width="19" height="1.5" fill="#3f4650"/><rect x="6.5" y="11.4" width="13" height="1.5" fill="#3f4650"/><rect x="0.5" y="14.2" width="19" height="1.5" fill="#3f4650"/></svg>
<div style="left:577.5px;top:68px;width:41.9px;height:22.3px;border:1px solid #a3bbdb;border-radius:3px;background:linear-gradient(#d4e2f3,#c6d7ed 55%,#d1e0f2);box-shadow:0 0 0 1px rgba(255,255,255,.45);"></div>
<svg style="left:583px;top:70.5px;" width="22" height="17" viewBox="0 0 22 17"><path d="M2 15.5 L17 4.5" stroke="#555d6b" stroke-width="1.2"/><path d="M18.6 3.2 l-4.4 0.6 l2.6 3z" fill="#c43a32"/><g transform="rotate(-36 8 8)" fill="none" stroke="#1d2026" stroke-width="1.5"><path d="M0.5 10.5 l2.4 -6.5 l2.4 6.5 M1.4 8.4 h3"/><path d="M7.5 4 v6.5 h2.2 q2 -0.2 2 -1.8 q0 -1.4 -2 -1.5 q1.6 -0.2 1.6 -1.6 q0 -1.5 -1.8 -1.6z"/></g></svg>
<svg style="left:608px;top:77px;" width="7" height="4" viewBox="0 0 7 4"><path d="M0 0 h7 l-3.5 3.6z" fill="#5a78a8"/></svg>
<div style="left:577.5px;top:99.4px;width:59.5px;height:22.6px;border:1px solid #a3bbdb;border-radius:3px;background:linear-gradient(#d4e2f3,#c6d7ed 55%,#d1e0f2);box-shadow:0 0 0 1px rgba(255,255,255,.45);"></div>
<div style="left:606.5px;top:100.4px;width:1px;height:20.6px;background:rgba(170,190,220,.7);box-shadow:1px 0 0 rgba(255,255,255,.35);"></div>
<svg style="left:582px;top:101.5px;" width="22" height="18" viewBox="0 0 22 18"><path d="M6.5 4.5 v7 l-5.5 -3.5z" fill="#3a63c8"/><path d="M7.5 0 v17" stroke="#333" stroke-width=".9" stroke-dasharray="1.5 1.3"/><rect x="3" y="2.6" width="17" height="1.6" fill="#22262e"/><rect x="9" y="5.6" width="11" height="1.6" fill="#22262e"/><rect x="9" y="8.6" width="8" height="1.6" fill="#22262e"/><rect x="9" y="11.6" width="11" height="1.6" fill="#22262e"/><rect x="3" y="14.4" width="14" height="1.6" fill="#22262e"/></svg>
<svg style="left:611.5px;top:101.5px;" width="22" height="18" viewBox="0 0 22 18"><path d="M1 4.5 v7 l5.5 -3.5z" fill="#3a63c8"/><path d="M7.5 0 v17" stroke="#333" stroke-width=".9" stroke-dasharray="1.5 1.3"/><rect x="3" y="2.6" width="17" height="1.6" fill="#22262e"/><rect x="9" y="5.6" width="11" height="1.6" fill="#22262e"/><rect x="9" y="8.6" width="8" height="1.6" fill="#22262e"/><rect x="9" y="11.6" width="11" height="1.6" fill="#22262e"/><rect x="3" y="14.4" width="14" height="1.6" fill="#22262e"/></svg>
<div style="left:643px;top:64px;width:1px;height:60px;background:#a9bfdd;box-shadow:1px 0 0 rgba(255,255,255,.6);"></div>
<svg style="left:652.5px;top:70.5px;" width="22" height="17" viewBox="0 0 22 17"><rect x="0.5" y="1.5" width="14" height="5" fill="#fdfdff" stroke="#767d8c" stroke-width=".9"/><path d="M2 4 h18" stroke="#e2953a" stroke-width="1.4"/><rect x="0.5" y="8.5" width="14" height="7" fill="#fdfdff" stroke="#767d8c" stroke-width=".9"/><path d="M2 11 h10 M2 13.5 h8" stroke="#e2953a" stroke-width="1.3"/><path d="M20 5 v5 h-3 M18.5 8.4 l-1.8 1.6 l1.8 1.6" fill="none" stroke="#4b5568" stroke-width="1"/></svg>
<span class="t" style="left:678.00px;top:72.41px;font:11.2px/15px 'DejaVu Sans','Liberation Sans',sans-serif;color:#1f3f87;transform:scaleX(1.221);transform-origin:0 50%;-webkit-text-stroke:.3px #1f3f87;">Wrap Text</span>
<svg style="left:652.5px;top:102.5px;" width="21" height="16" viewBox="0 0 21 16"><rect x="0.5" y="0.5" width="20" height="15" fill="#fbfcff" stroke="#5f6676" stroke-width=".9"/><path d="M0.5 4 h20 M0.5 11.6 h20 M7 0.5 v3.5 M14 0.5 v3.5 M7 11.6 v4 M14 11.6 v4" stroke="#8f97a8" stroke-width=".8"/><path d="M2 7.8 h5 M14 7.8 h5" stroke="#222" stroke-width="1.2"/><path d="M6 5.8 l2.2 2 l-2.2 2z M15 5.8 l-2.2 2 l2.2 2z" fill="#222"/><rect x="9.3" y="5.6" width="2.6" height="4.4" fill="#222"/></svg>
<span class="t" style="left:678.00px;top:103.51px;font:11.2px/15px 'DejaVu Sans','Liberation Sans',sans-serif;color:#1f3f87;transform:scaleX(1.237);transform-origin:0 50%;-webkit-text-stroke:.3px #1f3f87;">Merge &amp; Center</span>
<svg style="left:793px;top:109px;" width="7" height="4" viewBox="0 0 7 4"><path d="M0 0 h7 l-3.5 3.6z" fill="#5a78a8"/></svg>
<div style="left:821px;top:68px;width:164px;height:22.3px;border:1px solid #abc1de;background:linear-gradient(#e9f0fa,#eef4fc);"></div>
<span class="t" style="left:825.00px;top:70.74px;font:13px/17px 'DejaVu Sans','Liberation Sans',sans-serif;color:#16161a;transform:scaleX(1.025);transform-origin:0 50%;-webkit-text-stroke:.25px #16161a;">General</span>
<div style="left:821px;top:99.4px;width:105px;height:22px;border:1px solid #a3bbdb;border-radius:3px;background:linear-gradient(#d4e2f3,#c6d7ed 55%,#d1e0f2);box-shadow:0 0 0 1px rgba(255,255,255,.45);"></div>
<div style="left:866.5px;top:100.4px;width:1px;height:20px;background:rgba(170,190,220,.7);box-shadow:1px 0 0 rgba(255,255,255,.35);"></div>
<div style="left:898.5px;top:100.4px;width:1px;height:20px;background:rgba(170,190,220,.7);box-shadow:1px 0 0 rgba(255,255,255,.35);"></div>
<span class="t" style="left:831.85px;top:100.15px;font:15px/20px 'Liberation Serif',serif;font-weight:700;color:#111;transform:scaleX(1.300);transform-origin:50% 50%;">$</span>
<svg style="left:854px;top:108.5px;" width="7" height="4" viewBox="0 0 7 4"><path d="M0 0 h7 l-3.5 3.6z" fill="#5a78a8"/></svg>
<span class="t" style="left:874.59px;top:101.95px;font:13.5px/18px 'DejaVu Sans','Liberation Sans',sans-serif;color:#111;transform:scaleX(1.050);transform-origin:50% 50%;">%</span>
<span class="t" style="left:910.00px;top:92.60px;font:20px/26px 'Liberation Serif',serif;font-weight:700;color:#111;transform:scaleX(1.300);transform-origin:50% 50%;">,</span>
<div style="left:932.5px;top:99.4px;width:52.5px;height:22px;border:1px solid #a3bbdb;border-radius:3px;background:linear-gradient(#d4e2f3,#c6d7ed 55%,#d1e0f2);box-shadow:0 0 0 1px rgba(255,255,255,.45);"></div>
<svg style="left:936px;top:102px;" width="24" height="18" viewBox="0 0 24 18"><path d="M1.5 4 l4 -2.6 v5.2z" fill="#3a63c8"/><path d="M4 4 h6" stroke="#3a63c8" stroke-width="1.3"/></svg>
<span class="t" style="left:946.50px;top:101.64px;font:7.6px/10px 'DejaVu Sans','Liberation Sans',sans-serif;font-weight:700;color:#111;transform:scaleX(1.200);transform-origin:0 50%;">.0</span>
<span class="t" style="left:939.50px;top:110.44px;font:7.6px/10px 'DejaVu Sans','Liberation Sans',sans-serif;font-weight:700;color:#111;transform:scaleX(1.200);transform-origin:0 50%;">.00</span>
<div style="left:0px;top:150.8px;width:962px;height:3.8px;background:linear-gradient(#b4d0f0,#9fc0e6 60%,#c9dcf3);"></div>
<div style="left:0px;top:154.6px;width:962px;height:22.2px;background:#fff;"></div>
<span class="t" style="left:77.50px;top:157.34px;font:13px/17px 'DejaVu Sans','Liberation Sans',sans-serif;color:#16161a;transform:scaleX(1.232);transform-origin:0 50%;-webkit-text-stroke:.25px #16161a;">O22</span>
<svg style="left:194.5px;top:163.6px;" width="11" height="6" viewBox="0 0 11 6"><path d="M0 0 h10.5 l-5.25 5.4z" fill="#111"/></svg>
<div style="left:212.5px;top:155px;width:113.3px;height:21.2px;border:1px solid #9db5d6;border-right-color:#b7c9e2;border-radius:11px 0 0 11px;background:linear-gradient(#e3edfa,#cfdff3 50%,#b3cbe9);"></div>
<div style="left:221px;top:160.5px;width:9.5px;height:9.5px;border-radius:50%;background:radial-gradient(circle at 40% 40%,#cfd3d8,#a9b1bd 60%,#c3cad6);"></div>
<span class="t" style="left:302.50px;top:155.75px;font:15px/20px 'Liberation Serif',serif;font-weight:700;font-style:italic;color:#3a3f4a;transform:scaleX(1.200);transform-origin:50% 50%;">f</span>
<span class="t" style="left:310.12px;top:161.63px;font:9.5px/12px 'Liberation Serif',serif;font-weight:700;font-style:italic;color:#3a3f4a;transform:scaleX(1.250);transform-origin:50% 50%;">x</span>
<div style="left:0px;top:176.8px;width:962px;height:1.2px;background:#8aa4c6;"></div>
<div style="left:0px;top:178px;width:962px;height:3.6px;background:linear-gradient(#cfe0f5,#e3eefb);"></div>
<div style="left:0px;top:181.6px;width:962px;height:22.2px;background:linear-gradient(#f2f5fb,#e6ebf4 45%,#d6deeb 50%,#d9e1ee);border-top:1px solid #96accb;border-bottom:1px solid #9fb3cf;"></div>
<div style="left:0px;top:181.6px;width:34px;height:22.2px;background:linear-gradient(#c9d8f0,#b4c7e6);border:1px solid #9fb3cf;"></div>
<svg style="left:20px;top:187.5px;" width="12" height="12" viewBox="0 0 12 12"><path d="M11 0.5 V11 H0.5z" fill="#e8eef8"/></svg>
<div style="left:110.4px;top:182.6px;width:1.2px;height:20.4px;background:#9fb3cf;"></div>
<span class="t" style="left:70.14px;top:185.63px;font:12.6px/16px 'DejaVu Sans','Liberation Sans',sans-serif;color:#3c4658;transform:scaleX(1.300);transform-origin:50% 50%;-webkit-text-stroke:.25px #3c4658;">I</span>
<div style="left:187px;top:182.6px;width:1.2px;height:20.4px;background:#9fb3cf;"></div>
<span class="t" style="left:146.94px;top:185.63px;font:12.6px/16px 'DejaVu Sans','Liberation Sans',sans-serif;color:#3c4658;transform:scaleX(1.300);transform-origin:50% 50%;-webkit-text-stroke:.25px #3c4658;">J</span>
<div style="left:272.8px;top:182.6px;width:1.2px;height:20.4px;background:#9fb3cf;"></div>
<span class="t" style="left:225.87px;top:185.63px;font:12.6px/16px 'DejaVu Sans','Liberation Sans',sans-serif;color:#3c4658;transform:scaleX(1.300);transform-origin:50% 50%;-webkit-text-stroke:.25px #3c4658;">K</span>
<div style="left:349px;top:182.6px;width:1.2px;height:20.4px;background:#9fb3cf;"></div>
<span class="t" style="left:307.49px;top:185.63px;font:12.6px/16px 'DejaVu Sans','Liberation Sans',sans-serif;color:#3c4658;transform:scaleX(1.300);transform-origin:50% 50%;-webkit-text-stroke:.25px #3c4658;">L</span>
<div style="left:434.4px;top:182.6px;width:1.2px;height:20.4px;background:#9fb3cf;"></div>
<span class="t" style="left:386.36px;top:185.63px;font:12.6px/16px 'DejaVu Sans','Liberation Sans',sans-serif;color:#3c4658;transform:scaleX(1.300);transform-origin:50% 50%;-webkit-text-stroke:.25px #3c4658;">M</span>
<div style="left:520px;top:182.6px;width:1.2px;height:20.4px;background:#9fb3cf;"></div>
<span class="t" style="left:472.59px;top:185.63px;font:12.6px/16px 'DejaVu Sans','Liberation Sans',sans-serif;color:#3c4658;transform:scaleX(1.300);transform-origin:50% 50%;-webkit-text-stroke:.25px #3c4658;">N</span>
<div style="left:520.6px;top:181.6px;width:85.4px;height:22.2px;background:linear-gradient(#f9d99f,#f6c777 50%,#f2b95a);border-top:1px solid #c28a30;border-bottom:1px solid #c28a30;"></div>
<div style="left:605.4px;top:182.6px;width:1.2px;height:20.4px;background:#9fb3cf;"></div>
<span class="t" style="left:557.84px;top:185.63px;font:12.6px/16px 'DejaVu Sans','Liberation Sans',sans-serif;color:#3c4658;transform:scaleX(1.300);transform-origin:50% 50%;-webkit-text-stroke:.25px #3c4658;">O</span>
<div style="left:690.8px;top:182.6px;width:1.2px;height:20.4px;background:#9fb3cf;"></div>
<span class="t" style="left:644.40px;top:185.63px;font:12.6px/16px 'DejaVu Sans','Liberation Sans',sans-serif;color:#3c4658;transform:scaleX(1.300);transform-origin:50% 50%;-webkit-text-stroke:.25px #3c4658;">P</span>
<div style="left:776.4px;top:182.6px;width:1.2px;height:20.4px;background:#9fb3cf;"></div>
<span class="t" style="left:728.74px;top:185.63px;font:12.6px/16px 'DejaVu Sans','Liberation Sans',sans-serif;color:#3c4658;transform:scaleX(1.300);transform-origin:50% 50%;-webkit-text-stroke:.25px #3c4658;">Q</span>
<div style="left:862px;top:182.6px;width:1.2px;height:20.4px;background:#9fb3cf;"></div>
<span class="t" style="left:814.92px;top:185.63px;font:12.6px/16px 'DejaVu Sans','Liberation Sans',sans-serif;color:#3c4658;transform:scaleX(1.300);transform-origin:50% 50%;-webkit-text-stroke:.25px #3c4658;">R</span>
<div style="left:947.4px;top:182.6px;width:1.2px;height:20.4px;background:#9fb3cf;"></div>
<span class="t" style="left:900.80px;top:185.63px;font:12.6px/16px 'DejaVu Sans','Liberation Sans',sans-serif;color:#3c4658;transform:scaleX(1.300);transform-origin:50% 50%;-webkit-text-stroke:.25px #3c4658;">S</span>
<div style="left:1034.4px;top:182.6px;width:1.2px;height:20.4px;background:#9fb3cf;"></div>
<div style="left:33.4px;top:182.6px;width:1.2px;height:20.4px;background:#9fb3cf;"></div>
<div style="left:0px;top:203px;width:34px;height:393px;background:#e6ecf6;border-right:1.2px solid #9fb3cf;"></div>
<div style="left:0px;top:224px;width:34px;height:1px;background:#a9bbd5;"></div>
<div style="left:34px;top:224px;width:930px;height:1px;background:#d5d9e1;"></div>
<span class="t" style="left:12.56px;top:207.83px;font:12.4px/16px 'DejaVu Sans','Liberation Sans',sans-serif;color:#2c3444;transform:scaleX(1.160);transform-origin:50% 50%;-webkit-text-stroke:.25px #2c3444;">1</span>
<div style="left:35px;top:203px;width:75.4px;height:21.69px;overflow:hidden">
<span class="t" style="left:2.70px;top:4.83px;font:12.4px/16px 'DejaVu Sans','Liberation Sans',sans-serif;color:#15161a;transform:scaleX(1.300);transform-origin:0 50%;-webkit-text-stroke:.3px #15161a;">City</span>
</div>
<div style="left:112px;top:203px;width:75px;height:21.69px;overflow:hidden">
<span class="t" style="left:2.70px;top:4.83px;font:12.4px/16px 'DejaVu Sans','Liberation Sans',sans-serif;color:#15161a;transform:scaleX(1.300);transform-origin:0 50%;-webkit-text-stroke:.3px #15161a;">Pincode</span>
</div>
<div style="left:188.6px;top:203px;width:84.2px;height:21.69px;overflow:hidden">
<span class="t" style="left:2.70px;top:4.83px;font:12.4px/16px 'DejaVu Sans','Liberation Sans',sans-serif;color:#15161a;transform:scaleX(1.300);transform-origin:0 50%;-webkit-text-stroke:.3px #15161a;">Paymentt</span>
</div>
<div style="left:274.4px;top:203px;width:74.6px;height:21.69px;overflow:hidden">
<span class="t" style="left:2.70px;top:4.83px;font:12.4px/16px 'DejaVu Sans','Liberation Sans',sans-serif;color:#15161a;transform:scaleX(1.300);transform-origin:0 50%;-webkit-text-stroke:.3px #15161a;">Amount</span>
</div>
<div style="left:350.6px;top:203px;width:83.8px;height:21.69px;overflow:hidden">
<span class="t" style="left:2.70px;top:4.83px;font:12.4px/16px 'DejaVu Sans','Liberation Sans',sans-serif;color:#15161a;transform:scaleX(1.300);transform-origin:0 50%;-webkit-text-stroke:.3px #15161a;">Packagest</span>
</div>
<div style="left:436px;top:203px;width:84px;height:21.69px;overflow:hidden">
<span class="t" style="left:2.70px;top:4.83px;font:12.4px/16px 'DejaVu Sans','Liberation Sans',sans-serif;color:#15161a;transform:scaleX(1.300);transform-origin:0 50%;-webkit-text-stroke:.3px #15161a;">Packagety</span>
</div>
<div style="left:521.6px;top:203px;width:83.8px;height:21.69px;overflow:hidden">
<span class="t" style="left:2.70px;top:4.83px;font:12.4px/16px 'DejaVu Sans','Liberation Sans',sans-serif;color:#15161a;transform:scaleX(1.300);transform-origin:0 50%;-webkit-text-stroke:.3px #15161a;">Piece</span>
</div>
<div style="left:607px;top:203px;width:83.8px;height:21.69px;overflow:hidden">
<span class="t" style="left:2.70px;top:4.83px;font:12.4px/16px 'DejaVu Sans','Liberation Sans',sans-serif;color:#15161a;transform:scaleX(1.300);transform-origin:0 50%;-webkit-text-stroke:.3px #15161a;">Length</span>
</div>
<div style="left:692.4px;top:203px;width:84px;height:21.69px;overflow:hidden">
<span class="t" style="left:2.70px;top:4.83px;font:12.4px/16px 'DejaVu Sans','Liberation Sans',sans-serif;color:#15161a;transform:scaleX(1.300);transform-origin:0 50%;-webkit-text-stroke:.3px #15161a;">Breadth</span>
</div>
<div style="left:778px;top:203px;width:84px;height:21.69px;overflow:hidden">
<span class="t" style="left:2.70px;top:4.83px;font:12.4px/16px 'DejaVu Sans','Liberation Sans',sans-serif;color:#15161a;transform:scaleX(1.300);transform-origin:0 50%;-webkit-text-stroke:.3px #15161a;">Height</span>
</div>
<div style="left:863.6px;top:203px;width:83.8px;height:21.69px;overflow:hidden">
<span class="t" style="left:2.70px;top:4.83px;font:12.4px/16px 'DejaVu Sans','Liberation Sans',sans-serif;color:#15161a;transform:scaleX(1.300);transform-origin:0 50%;-webkit-text-stroke:.3px #15161a;">Weight</span>
</div>
<div style="left:949px;top:203px;width:85.4px;height:21.69px;overflow:hidden">
<span class="t" style="left:2.70px;top:4.83px;font:12.4px/16px 'DejaVu Sans','Liberation Sans',sans-serif;color:#15161a;transform:scaleX(1.300);transform-origin:0 50%;-webkit-text-stroke:.3px #15161a;">P</span>
</div>
<div style="left:0px;top:245px;width:34px;height:1px;background:#a9bbd5;"></div>
<div style="left:34px;top:245px;width:930px;height:1px;background:#d5d9e1;"></div>
<span class="t" style="left:12.56px;top:229.52px;font:12.4px/16px 'DejaVu Sans','Liberation Sans',sans-serif;color:#2c3444;transform:scaleX(1.160);transform-origin:50% 50%;-webkit-text-stroke:.25px #2c3444;">2</span>
<div style="left:35px;top:224.69px;width:75.4px;height:21.69px;overflow:hidden">
<span class="t" style="left:2.70px;top:4.83px;font:12.4px/16px 'DejaVu Sans','Liberation Sans',sans-serif;color:#15161a;transform:scaleX(1.300);transform-origin:0 50%;-webkit-text-stroke:.3px #15161a;">Chennai</span>
</div>
<span class="t" style="left:136.66px;top:229.52px;font:12.4px/16px 'DejaVu Sans','Liberation Sans',sans-serif;color:#15161a;transform:scaleX(1.160);transform-origin:100% 50%;-webkit-text-stroke:.3px #15161a;">602001</span>
<div style="left:188.6px;top:224.69px;width:84.2px;height:21.69px;overflow:hidden">
<span class="t" style="left:2.70px;top:4.83px;font:12.4px/16px 'DejaVu Sans','Liberation Sans',sans-serif;color:#15161a;transform:scaleX(1.300);transform-origin:0 50%;-webkit-text-stroke:.3px #15161a;">Prepay</span>
</div>
<span class="t" style="left:338.11px;top:229.52px;font:12.4px/16px 'DejaVu Sans','Liberation Sans',sans-serif;color:#15161a;transform:scaleX(1.160);transform-origin:100% 50%;-webkit-text-stroke:.3px #15161a;">0</span>
<div style="left:350.6px;top:224.69px;width:83.8px;height:21.69px;overflow:hidden">
<span class="t" style="left:2.70px;top:4.83px;font:12.4px/16px 'DejaVu Sans','Liberation Sans',sans-serif;color:#15161a;transform:scaleX(1.300);transform-origin:0 50%;-webkit-text-stroke:.3px #15161a;">delivery</span>
</div>
<div style="left:436px;top:224.69px;width:84px;height:21.69px;overflow:hidden">
<span class="t" style="left:2.70px;top:4.83px;font:12.4px/16px 'DejaVu Sans','Liberation Sans',sans-serif;color:#15161a;transform:scaleX(1.300);transform-origin:0 50%;-webkit-text-stroke:.3px #15161a;">Package</span>
</div>
<span class="t" style="left:594.51px;top:229.52px;font:12.4px/16px 'DejaVu Sans','Liberation Sans',sans-serif;color:#15161a;transform:scaleX(1.160);transform-origin:100% 50%;-webkit-text-stroke:.3px #15161a;">1</span>
<span class="t" style="left:679.91px;top:229.52px;font:12.4px/16px 'DejaVu Sans','Liberation Sans',sans-serif;color:#15161a;transform:scaleX(1.160);transform-origin:100% 50%;-webkit-text-stroke:.3px #15161a;">4</span>
<span class="t" style="left:765.51px;top:229.52px;font:12.4px/16px 'DejaVu Sans','Liberation Sans',sans-serif;color:#15161a;transform:scaleX(1.160);transform-origin:100% 50%;-webkit-text-stroke:.3px #15161a;">8</span>
<span class="t" style="left:851.11px;top:229.52px;font:12.4px/16px 'DejaVu Sans','Liberation Sans',sans-serif;color:#15161a;transform:scaleX(1.160);transform-origin:100% 50%;-webkit-text-stroke:.3px #15161a;">8</span>
<span class="t" style="left:928.62px;top:229.52px;font:12.4px/16px 'DejaVu Sans','Liberation Sans',sans-serif;color:#15161a;transform:scaleX(1.160);transform-origin:100% 50%;-webkit-text-stroke:.3px #15161a;">14</span>
<div style="left:0px;top:267px;width:34px;height:1px;background:#a9bbd5;"></div>
<div style="left:34px;top:267px;width:930px;height:1px;background:#d5d9e1;"></div>
<span class="t" style="left:12.56px;top:251.21px;font:12.4px/16px 'DejaVu Sans','Liberation Sans',sans-serif;color:#2c3444;transform:scaleX(1.160);transform-origin:50% 50%;-webkit-text-stroke:.25px #2c3444;">3</span>
<div style="left:35px;top:246.38px;width:75.4px;height:21.69px;overflow:hidden">
<span class="t" style="left:2.70px;top:4.83px;font:12.4px/16px 'DejaVu Sans','Liberation Sans',sans-serif;color:#15161a;transform:scaleX(1.300);transform-origin:0 50%;-webkit-text-stroke:.3px #15161a;">Chennai</span>
</div>
<span class="t" style="left:136.66px;top:251.21px;font:12.4px/16px 'DejaVu Sans','Liberation Sans',sans-serif;color:#15161a;transform:scaleX(1.160);transform-origin:100% 50%;-webkit-text-stroke:.3px #15161a;">602003</span>
<div style="left:188.6px;top:246.38px;width:84.2px;height:21.69px;overflow:hidden">
<span class="t" style="left:2.70px;top:4.83px;font:12.4px/16px 'DejaVu Sans','Liberation Sans',sans-serif;color:#15161a;transform:scaleX(1.300);transform-origin:0 50%;-webkit-text-stroke:.3px #15161a;">Prepay</span>
</div>
<span class="t" style="left:338.11px;top:251.21px;font:12.4px/16px 'DejaVu Sans','Liberation Sans',sans-serif;color:#15161a;transform:scaleX(1.160);transform-origin:100% 50%;-webkit-text-stroke:.3px #15161a;">0</span>
<div style="left:350.6px;top:246.38px;width:83.8px;height:21.69px;overflow:hidden">
<span class="t" style="left:2.70px;top:4.83px;font:12.4px/16px 'DejaVu Sans','Liberation Sans',sans-serif;color:#15161a;transform:scaleX(1.300);transform-origin:0 50%;-webkit-text-stroke:.3px #15161a;">delivery</span>
</div>
<div style="left:436px;top:246.38px;width:84px;height:21.69px;overflow:hidden">
<span class="t" style="left:2.70px;top:4.83px;font:12.4px/16px 'DejaVu Sans','Liberation Sans',sans-serif;color:#15161a;transform:scaleX(1.300);transform-origin:0 50%;-webkit-text-stroke:.3px #15161a;">Package</span>
</div>
<span class="t" style="left:594.51px;top:251.21px;font:12.4px/16px 'DejaVu Sans','Liberation Sans',sans-serif;color:#15161a;transform:scaleX(1.160);transform-origin:100% 50%;-webkit-text-stroke:.3px #15161a;">1</span>
<span class="t" style="left:672.02px;top:251.21px;font:12.4px/16px 'DejaVu Sans','Liberation Sans',sans-serif;color:#15161a;transform:scaleX(1.160);transform-origin:100% 50%;-webkit-text-stroke:.3px #15161a;">10</span>
<span class="t" style="left:757.62px;top:251.21px;font:12.4px/16px 'DejaVu Sans','Liberation Sans',sans-serif;color:#15161a;transform:scaleX(1.160);transform-origin:100% 50%;-webkit-text-stroke:.3px #15161a;">11</span>
<span class="t" style="left:851.11px;top:251.21px;font:12.4px/16px 'DejaVu Sans','Liberation Sans',sans-serif;color:#15161a;transform:scaleX(1.160);transform-origin:100% 50%;-webkit-text-stroke:.3px #15161a;">5</span>
<span class="t" style="left:928.62px;top:251.21px;font:12.4px/16px 'DejaVu Sans','Liberation Sans',sans-serif;color:#15161a;transform:scaleX(1.160);transform-origin:100% 50%;-webkit-text-stroke:.3px #15161a;">18</span>
<div style="left:0px;top:289px;width:34px;height:1px;background:#a9bbd5;"></div>
<div style="left:34px;top:289px;width:930px;height:1px;background:#d5d9e1;"></div>
<span class="t" style="left:12.56px;top:272.90px;font:12.4px/16px 'DejaVu Sans','Liberation Sans',sans-serif;color:#2c3444;transform:scaleX(1.160);transform-origin:50% 50%;-webkit-text-stroke:.25px #2c3444;">4</span>
<div style="left:35px;top:268.07px;width:75.4px;height:21.69px;overflow:hidden">
<span class="t" style="left:2.70px;top:4.83px;font:12.4px/16px 'DejaVu Sans','Liberation Sans',sans-serif;color:#15161a;transform:scaleX(1.300);transform-origin:0 50%;-webkit-text-stroke:.3px #15161a;">Chennai</span>
</div>
<span class="t" style="left:136.66px;top:272.90px;font:12.4px/16px 'DejaVu Sans','Liberation Sans',sans-serif;color:#15161a;transform:scaleX(1.160);transform-origin:100% 50%;-webkit-text-stroke:.3px #15161a;">603209</span>
<div style="left:188.6px;top:268.07px;width:84.2px;height:21.69px;overflow:hidden">
<span class="t" style="left:2.70px;top:4.83px;font:12.4px/16px 'DejaVu Sans','Liberation Sans',sans-serif;color:#15161a;transform:scaleX(1.300);transform-origin:0 50%;-webkit-text-stroke:.3px #15161a;">Prepay</span>
</div>
<span class="t" style="left:338.11px;top:272.90px;font:12.4px/16px 'DejaVu Sans','Liberation Sans',sans-serif;color:#15161a;transform:scaleX(1.160);transform-origin:100% 50%;-webkit-text-stroke:.3px #15161a;">0</span>
<div style="left:350.6px;top:268.07px;width:83.8px;height:21.69px;overflow:hidden">
<span class="t" style="left:2.70px;top:4.83px;font:12.4px/16px 'DejaVu Sans','Liberation Sans',sans-serif;color:#15161a;transform:scaleX(1.300);transform-origin:0 50%;-webkit-text-stroke:.3px #15161a;">delivery</span>
</div>
<div style="left:436px;top:268.07px;width:84px;height:21.69px;overflow:hidden">
<span class="t" style="left:2.70px;top:4.83px;font:12.4px/16px 'DejaVu Sans','Liberation Sans',sans-serif;color:#15161a;transform:scaleX(1.300);transform-origin:0 50%;-webkit-text-stroke:.3px #15161a;">Package</span>
</div>
<span class="t" style="left:594.51px;top:272.90px;font:12.4px/16px 'DejaVu Sans','Liberation Sans',sans-serif;color:#15161a;transform:scaleX(1.160);transform-origin:100% 50%;-webkit-text-stroke:.3px #15161a;">1</span>
<span class="t" style="left:672.02px;top:272.90px;font:12.4px/16px 'DejaVu Sans','Liberation Sans',sans-serif;color:#15161a;transform:scaleX(1.160);transform-origin:100% 50%;-webkit-text-stroke:.3px #15161a;">15</span>
<span class="t" style="left:765.51px;top:272.90px;font:12.4px/16px 'DejaVu Sans','Liberation Sans',sans-serif;color:#15161a;transform:scaleX(1.160);transform-origin:100% 50%;-webkit-text-stroke:.3px #15161a;">2</span>
<span class="t" style="left:843.22px;top:272.90px;font:12.4px/16px 'DejaVu Sans','Liberation Sans',sans-serif;color:#15161a;transform:scaleX(1.160);transform-origin:100% 50%;-webkit-text-stroke:.3px #15161a;">12</span>
<span class="t" style="left:936.51px;top:272.90px;font:12.4px/16px 'DejaVu Sans','Liberation Sans',sans-serif;color:#15161a;transform:scaleX(1.160);transform-origin:100% 50%;-webkit-text-stroke:.3px #15161a;">8</span>
<div style="left:0px;top:310px;width:34px;height:1px;background:#a9bbd5;"></div>
<div style="left:34px;top:310px;width:930px;height:1px;background:#d5d9e1;"></div>
<span class="t" style="left:12.56px;top:294.59px;font:12.4px/16px 'DejaVu Sans','Liberation Sans',sans-serif;color:#2c3444;transform:scaleX(1.160);transform-origin:50% 50%;-webkit-text-stroke:.25px #2c3444;">5</span>
<div style="left:35px;top:289.76px;width:75.4px;height:21.69px;overflow:hidden">
<span class="t" style="left:2.70px;top:4.83px;font:12.4px/16px 'DejaVu Sans','Liberation Sans',sans-serif;color:#15161a;transform:scaleX(1.300);transform-origin:0 50%;-webkit-text-stroke:.3px #15161a;">Chennai</span>
</div>
<span class="t" style="left:136.66px;top:294.59px;font:12.4px/16px 'DejaVu Sans','Liberation Sans',sans-serif;color:#15161a;transform:scaleX(1.160);transform-origin:100% 50%;-webkit-text-stroke:.3px #15161a;">603204</span>
<div style="left:188.6px;top:289.76px;width:84.2px;height:21.69px;overflow:hidden">
<span class="t" style="left:2.70px;top:4.83px;font:12.4px/16px 'DejaVu Sans','Liberation Sans',sans-serif;color:#15161a;transform:scaleX(1.300);transform-origin:0 50%;-webkit-text-stroke:.3px #15161a;">Prepay</span>
</div>
<span class="t" style="left:338.11px;top:294.59px;font:12.4px/16px 'DejaVu Sans','Liberation Sans',sans-serif;color:#15161a;transform:scaleX(1.160);transform-origin:100% 50%;-webkit-text-stroke:.3px #15161a;">0</span>
<div style="left:350.6px;top:289.76px;width:83.8px;height:21.69px;overflow:hidden">
<span class="t" style="left:2.70px;top:4.83px;font:12.4px/16px 'DejaVu Sans','Liberation Sans',sans-serif;color:#15161a;transform:scaleX(1.300);transform-origin:0 50%;-webkit-text-stroke:.3px #15161a;">delivery</span>
</div>
<div style="left:436px;top:289.76px;width:84px;height:21.69px;overflow:hidden">
<span class="t" style="left:2.70px;top:4.83px;font:12.4px/16px 'DejaVu Sans','Liberation Sans',sans-serif;color:#15161a;transform:scaleX(1.300);transform-origin:0 50%;-webkit-text-stroke:.3px #15161a;">Package</span>
</div>
<span class="t" style="left:594.51px;top:294.59px;font:12.4px/16px 'DejaVu Sans','Liberation Sans',sans-serif;color:#15161a;transform:scaleX(1.160);transform-origin:100% 50%;-webkit-text-stroke:.3px #15161a;">1</span>
<span class="t" style="left:672.02px;top:294.59px;font:12.4px/16px 'DejaVu Sans','Liberation Sans',sans-serif;color:#15161a;transform:scaleX(1.160);transform-origin:100% 50%;-webkit-text-stroke:.3px #15161a;">14</span>
<span class="t" style="left:757.62px;top:294.59px;font:12.4px/16px 'DejaVu Sans','Liberation Sans',sans-serif;color:#15161a;transform:scaleX(1.160);transform-origin:100% 50%;-webkit-text-stroke:.3px #15161a;">17</span>
<span class="t" style="left:851.11px;top:294.59px;font:12.4px/16px 'DejaVu Sans','Liberation Sans',sans-serif;color:#15161a;transform:scaleX(1.160);transform-origin:100% 50%;-webkit-text-stroke:.3px #15161a;">7</span>
<span class="t" style="left:936.51px;top:294.59px;font:12.4px/16px 'DejaVu Sans','Liberation Sans',sans-serif;color:#15161a;transform:scaleX(1.160);transform-origin:100% 50%;-webkit-text-stroke:.3px #15161a;">9</span>
<div style="left:0px;top:332px;width:34px;height:1px;background:#a9bbd5;"></div>
<div style="left:34px;top:332px;width:930px;height:1px;background:#d5d9e1;"></div>
<span class="t" style="left:12.56px;top:316.28px;font:12.4px/16px 'DejaVu Sans','Liberation Sans',sans-serif;color:#2c3444;transform:scaleX(1.160);transform-origin:50% 50%;-webkit-text-stroke:.25px #2c3444;">6</span>
<div style="left:35px;top:311.45px;width:75.4px;height:21.69px;overflow:hidden">
<span class="t" style="left:2.70px;top:4.83px;font:12.4px/16px 'DejaVu Sans','Liberation Sans',sans-serif;color:#15161a;transform:scaleX(1.300);transform-origin:0 50%;-webkit-text-stroke:.3px #15161a;">Chennai</span>
</div>
<span class="t" style="left:136.66px;top:316.28px;font:12.4px/16px 'DejaVu Sans','Liberation Sans',sans-serif;color:#15161a;transform:scaleX(1.160);transform-origin:100% 50%;-webkit-text-stroke:.3px #15161a;">600073</span>
<div style="left:188.6px;top:311.45px;width:84.2px;height:21.69px;overflow:hidden">
<span class="t" style="left:2.70px;top:4.83px;font:12.4px/16px 'DejaVu Sans','Liberation Sans',sans-serif;color:#15161a;transform:scaleX(1.300);transform-origin:0 50%;-webkit-text-stroke:.3px #15161a;">Prepay</span>
</div>
<span class="t" style="left:338.11px;top:316.28px;font:12.4px/16px 'DejaVu Sans','Liberation Sans',sans-serif;color:#15161a;transform:scaleX(1.160);transform-origin:100% 50%;-webkit-text-stroke:.3px #15161a;">0</span>
<div style="left:350.6px;top:311.45px;width:83.8px;height:21.69px;overflow:hidden">
<span class="t" style="left:2.70px;top:4.83px;font:12.4px/16px 'DejaVu Sans','Liberation Sans',sans-serif;color:#15161a;transform:scaleX(1.300);transform-origin:0 50%;-webkit-text-stroke:.3px #15161a;">delivery</span>
</div>
<div style="left:436px;top:311.45px;width:84px;height:21.69px;overflow:hidden">
<span class="t" style="left:2.70px;top:4.83px;font:12.4px/16px 'DejaVu Sans','Liberation Sans',sans-serif;color:#15161a;transform:scaleX(1.300);transform-origin:0 50%;-webkit-text-stroke:.3px #15161a;">Package</span>
</div>
<span class="t" style="left:594.51px;top:316.28px;font:12.4px/16px 'DejaVu Sans','Liberation Sans',sans-serif;color:#15161a;transform:scaleX(1.160);transform-origin:100% 50%;-webkit-text-stroke:.3px #15161a;">1</span>
<span class="t" style="left:672.02px;top:316.28px;font:12.4px/16px 'DejaVu Sans','Liberation Sans',sans-serif;color:#15161a;transform:scaleX(1.160);transform-origin:100% 50%;-webkit-text-stroke:.3px #15161a;">16</span>
<span class="t" style="left:757.62px;top:316.28px;font:12.4px/16px 'DejaVu Sans','Liberation Sans',sans-serif;color:#15161a;transform:scaleX(1.160);transform-origin:100% 50%;-webkit-text-stroke:.3px #15161a;">17</span>
<span class="t" style="left:843.22px;top:316.28px;font:12.4px/16px 'DejaVu Sans','Liberation Sans',sans-serif;color:#15161a;transform:scaleX(1.160);transform-origin:100% 50%;-webkit-text-stroke:.3px #15161a;">13</span>
<span class="t" style="left:928.62px;top:316.28px;font:12.4px/16px 'DejaVu Sans','Liberation Sans',sans-serif;color:#15161a;transform:scaleX(1.160);transform-origin:100% 50%;-webkit-text-stroke:.3px #15161a;">21</span>
<div style="left:0px;top:354px;width:34px;height:1px;background:#a9bbd5;"></div>
<div style="left:34px;top:354px;width:930px;height:1px;background:#d5d9e1;"></div>
<span class="t" style="left:12.56px;top:337.97px;font:12.4px/16px 'DejaVu Sans','Liberation Sans',sans-serif;color:#2c3444;transform:scaleX(1.160);transform-origin:50% 50%;-webkit-text-stroke:.25px #2c3444;">7</span>
<div style="left:35px;top:333.14px;width:75.4px;height:21.69px;overflow:hidden">
<span class="t" style="left:2.70px;top:4.83px;font:12.4px/16px 'DejaVu Sans','Liberation Sans',sans-serif;color:#15161a;transform:scaleX(1.300);transform-origin:0 50%;-webkit-text-stroke:.3px #15161a;">Chennai</span>
</div>
<span class="t" style="left:136.66px;top:337.97px;font:12.4px/16px 'DejaVu Sans','Liberation Sans',sans-serif;color:#15161a;transform:scaleX(1.160);transform-origin:100% 50%;-webkit-text-stroke:.3px #15161a;">600089</span>
<div style="left:188.6px;top:333.14px;width:84.2px;height:21.69px;overflow:hidden">
<span class="t" style="left:2.70px;top:4.83px;font:12.4px/16px 'DejaVu Sans','Liberation Sans',sans-serif;color:#15161a;transform:scaleX(1.300);transform-origin:0 50%;-webkit-text-stroke:.3px #15161a;">Prepay</span>
</div>
<span class="t" style="left:338.11px;top:337.97px;font:12.4px/16px 'DejaVu Sans','Liberation Sans',sans-serif;color:#15161a;transform:scaleX(1.160);transform-origin:100% 50%;-webkit-text-stroke:.3px #15161a;">0</span>
<div style="left:350.6px;top:333.14px;width:83.8px;height:21.69px;overflow:hidden">
<span class="t" style="left:2.70px;top:4.83px;font:12.4px/16px 'DejaVu Sans','Liberation Sans',sans-serif;color:#15161a;transform:scaleX(1.300);transform-origin:0 50%;-webkit-text-stroke:.3px #15161a;">delivery</span>
</div>
<div style="left:436px;top:333.14px;width:84px;height:21.69px;overflow:hidden">
<span class="t" style="left:2.70px;top:4.83px;font:12.4px/16px 'DejaVu Sans','Liberation Sans',sans-serif;color:#15161a;transform:scaleX(1.300);transform-origin:0 50%;-webkit-text-stroke:.3px #15161a;">Package</span>
</div>
<span class="t" style="left:594.51px;top:337.97px;font:12.4px/16px 'DejaVu Sans','Liberation Sans',sans-serif;color:#15161a;transform:scaleX(1.160);transform-origin:100% 50%;-webkit-text-stroke:.3px #15161a;">1</span>
<span class="t" style="left:672.02px;top:337.97px;font:12.4px/16px 'DejaVu Sans','Liberation Sans',sans-serif;color:#15161a;transform:scaleX(1.160);transform-origin:100% 50%;-webkit-text-stroke:.3px #15161a;">15</span>
<span class="t" style="left:757.62px;top:337.97px;font:12.4px/16px 'DejaVu Sans','Liberation Sans',sans-serif;color:#15161a;transform:scaleX(1.160);transform-origin:100% 50%;-webkit-text-stroke:.3px #15161a;">17</span>
<span class="t" style="left:843.22px;top:337.97px;font:12.4px/16px 'DejaVu Sans','Liberation Sans',sans-serif;color:#15161a;transform:scaleX(1.160);transform-origin:100% 50%;-webkit-text-stroke:.3px #15161a;">11</span>
<span class="t" style="left:928.62px;top:337.97px;font:12.4px/16px 'DejaVu Sans','Liberation Sans',sans-serif;color:#15161a;transform:scaleX(1.160);transform-origin:100% 50%;-webkit-text-stroke:.3px #15161a;">22</span>
<div style="left:0px;top:376px;width:34px;height:1px;background:#a9bbd5;"></div>
<div style="left:34px;top:376px;width:930px;height:1px;background:#d5d9e1;"></div>
<span class="t" style="left:12.56px;top:359.66px;font:12.4px/16px 'DejaVu Sans','Liberation Sans',sans-serif;color:#2c3444;transform:scaleX(1.160);transform-origin:50% 50%;-webkit-text-stroke:.25px #2c3444;">8</span>
<div style="left:35px;top:354.83px;width:75.4px;height:21.69px;overflow:hidden">
<span class="t" style="left:2.70px;top:4.83px;font:12.4px/16px 'DejaVu Sans','Liberation Sans',sans-serif;color:#15161a;transform:scaleX(1.300);transform-origin:0 50%;-webkit-text-stroke:.3px #15161a;">Chennai</span>
</div>
<span class="t" style="left:136.66px;top:359.66px;font:12.4px/16px 'DejaVu Sans','Liberation Sans',sans-serif;color:#15161a;transform:scaleX(1.160);transform-origin:100% 50%;-webkit-text-stroke:.3px #15161a;">600016</span>
<div style="left:188.6px;top:354.83px;width:84.2px;height:21.69px;overflow:hidden">
<span class="t" style="left:2.70px;top:4.83px;font:12.4px/16px 'DejaVu Sans','Liberation Sans',sans-serif;color:#15161a;transform:scaleX(1.300);transform-origin:0 50%;-webkit-text-stroke:.3px #15161a;">Prepay</span>
</div>
<span class="t" style="left:338.11px;top:359.66px;font:12.4px/16px 'DejaVu Sans','Liberation Sans',sans-serif;color:#15161a;transform:scaleX(1.160);transform-origin:100% 50%;-webkit-text-stroke:.3px #15161a;">0</span>
<div style="left:350.6px;top:354.83px;width:83.8px;height:21.69px;overflow:hidden">
<span class="t" style="left:2.70px;top:4.83px;font:12.4px/16px 'DejaVu Sans','Liberation Sans',sans-serif;color:#15161a;transform:scaleX(1.300);transform-origin:0 50%;-webkit-text-stroke:.3px #15161a;">delivery</span>
</div>
<div style="left:436px;top:354.83px;width:84px;height:21.69px;overflow:hidden">
<span class="t" style="left:2.70px;top:4.83px;font:12.4px/16px 'DejaVu Sans','Liberation Sans',sans-serif;color:#15161a;transform:scaleX(1.300);transform-origin:0 50%;-webkit-text-stroke:.3px #15161a;">Package</span>
</div>
<span class="t" style="left:594.51px;top:359.66px;font:12.4px/16px 'DejaVu Sans','Liberation Sans',sans-serif;color:#15161a;transform:scaleX(1.160);transform-origin:100% 50%;-webkit-text-stroke:.3px #15161a;">1</span>
<span class="t" style="left:672.02px;top:359.66px;font:12.4px/16px 'DejaVu Sans','Liberation Sans',sans-serif;color:#15161a;transform:scaleX(1.160);transform-origin:100% 50%;-webkit-text-stroke:.3px #15161a;">16</span>
<span class="t" style="left:757.62px;top:359.66px;font:12.4px/16px 'DejaVu Sans','Liberation Sans',sans-serif;color:#15161a;transform:scaleX(1.160);transform-origin:100% 50%;-webkit-text-stroke:.3px #15161a;">15</span>
<span class="t" style="left:843.22px;top:359.66px;font:12.4px/16px 'DejaVu Sans','Liberation Sans',sans-serif;color:#15161a;transform:scaleX(1.160);transform-origin:100% 50%;-webkit-text-stroke:.3px #15161a;">10</span>
<span class="t" style="left:928.62px;top:359.66px;font:12.4px/16px 'DejaVu Sans','Liberation Sans',sans-serif;color:#15161a;transform:scaleX(1.160);transform-origin:100% 50%;-webkit-text-stroke:.3px #15161a;">19</span>
<div style="left:0px;top:397px;width:34px;height:1px;background:#a9bbd5;"></div>
<div style="left:34px;top:397px;width:930px;height:1px;background:#d5d9e1;"></div>
<span class="t" style="left:12.56px;top:381.35px;font:12.4px/16px 'DejaVu Sans','Liberation Sans',sans-serif;color:#2c3444;transform:scaleX(1.160);transform-origin:50% 50%;-webkit-text-stroke:.25px #2c3444;">9</span>
<div style="left:35px;top:376.52px;width:75.4px;height:21.69px;overflow:hidden">
<span class="t" style="left:2.70px;top:4.83px;font:12.4px/16px 'DejaVu Sans','Liberation Sans',sans-serif;color:#15161a;transform:scaleX(1.300);transform-origin:0 50%;-webkit-text-stroke:.3px #15161a;">Chennai</span>
</div>
<span class="t" style="left:136.66px;top:381.35px;font:12.4px/16px 'DejaVu Sans','Liberation Sans',sans-serif;color:#15161a;transform:scaleX(1.160);transform-origin:100% 50%;-webkit-text-stroke:.3px #15161a;">600045</span>
<div style="left:188.6px;top:376.52px;width:84.2px;height:21.69px;overflow:hidden">
<span class="t" style="left:2.70px;top:4.83px;font:12.4px/16px 'DejaVu Sans','Liberation Sans',sans-serif;color:#15161a;transform:scaleX(1.300);transform-origin:0 50%;-webkit-text-stroke:.3px #15161a;">Prepay</span>
</div>
<span class="t" style="left:338.11px;top:381.35px;font:12.4px/16px 'DejaVu Sans','Liberation Sans',sans-serif;color:#15161a;transform:scaleX(1.160);transform-origin:100% 50%;-webkit-text-stroke:.3px #15161a;">0</span>
<div style="left:350.6px;top:376.52px;width:83.8px;height:21.69px;overflow:hidden">
<span class="t" style="left:2.70px;top:4.83px;font:12.4px/16px 'DejaVu Sans','Liberation Sans',sans-serif;color:#15161a;transform:scaleX(1.300);transform-origin:0 50%;-webkit-text-stroke:.3px #15161a;">delivery</span>
</div>
<div style="left:436px;top:376.52px;width:84px;height:21.69px;overflow:hidden">
<span class="t" style="left:2.70px;top:4.83px;font:12.4px/16px 'DejaVu Sans','Liberation Sans',sans-serif;color:#15161a;transform:scaleX(1.300);transform-origin:0 50%;-webkit-text-stroke:.3px #15161a;">Package</span>
</div>
<span class="t" style="left:594.51px;top:381.35px;font:12.4px/16px 'DejaVu Sans','Liberation Sans',sans-serif;color:#15161a;transform:scaleX(1.160);transform-origin:100% 50%;-webkit-text-stroke:.3px #15161a;">1</span>
<span class="t" style="left:672.02px;top:381.35px;font:12.4px/16px 'DejaVu Sans','Liberation Sans',sans-serif;color:#15161a;transform:scaleX(1.160);transform-origin:100% 50%;-webkit-text-stroke:.3px #15161a;">14</span>
<span class="t" style="left:757.62px;top:381.35px;font:12.4px/16px 'DejaVu Sans','Liberation Sans',sans-serif;color:#15161a;transform:scaleX(1.160);transform-origin:100% 50%;-webkit-text-stroke:.3px #15161a;">15</span>
<span class="t" style="left:843.22px;top:381.35px;font:12.4px/16px 'DejaVu Sans','Liberation Sans',sans-serif;color:#15161a;transform:scaleX(1.160);transform-origin:100% 50%;-webkit-text-stroke:.3px #15161a;">16</span>
<span class="t" style="left:928.62px;top:381.35px;font:12.4px/16px 'DejaVu Sans','Liberation Sans',sans-serif;color:#15161a;transform:scaleX(1.160);transform-origin:100% 50%;-webkit-text-stroke:.3px #15161a;">23</span>
<div style="left:0px;top:419px;width:34px;height:1px;background:#a9bbd5;"></div>
<div style="left:34px;top:419px;width:930px;height:1px;background:#d5d9e1;"></div>
<span class="t" style="left:8.61px;top:403.04px;font:12.4px/16px 'DejaVu Sans','Liberation Sans',sans-serif;color:#2c3444;transform:scaleX(1.160);transform-origin:50% 50%;-webkit-text-stroke:.25px #2c3444;">10</span>
<div style="left:35px;top:398.21px;width:75.4px;height:21.69px;overflow:hidden">
<span class="t" style="left:2.70px;top:4.83px;font:12.4px/16px 'DejaVu Sans','Liberation Sans',sans-serif;color:#15161a;transform:scaleX(1.300);transform-origin:0 50%;-webkit-text-stroke:.3px #15161a;">Chennai</span>
</div>
<span class="t" style="left:136.66px;top:403.04px;font:12.4px/16px 'DejaVu Sans','Liberation Sans',sans-serif;color:#15161a;transform:scaleX(1.160);transform-origin:100% 50%;-webkit-text-stroke:.3px #15161a;">600084</span>
<div style="left:188.6px;top:398.21px;width:84.2px;height:21.69px;overflow:hidden">
<span class="t" style="left:2.70px;top:4.83px;font:12.4px/16px 'DejaVu Sans','Liberation Sans',sans-serif;color:#15161a;transform:scaleX(1.300);transform-origin:0 50%;-webkit-text-stroke:.3px #15161a;">Prepay</span>
</div>
<span class="t" style="left:338.11px;top:403.04px;font:12.4px/16px 'DejaVu Sans','Liberation Sans',sans-serif;color:#15161a;transform:scaleX(1.160);transform-origin:100% 50%;-webkit-text-stroke:.3px #15161a;">0</span>
<div style="left:350.6px;top:398.21px;width:83.8px;height:21.69px;overflow:hidden">
<span class="t" style="left:2.70px;top:4.83px;font:12.4px/16px 'DejaVu Sans','Liberation Sans',sans-serif;color:#15161a;transform:scaleX(1.300);transform-origin:0 50%;-webkit-text-stroke:.3px #15161a;">delivery</span>
</div>
<div style="left:436px;top:398.21px;width:84px;height:21.69px;overflow:hidden">
<span class="t" style="left:2.70px;top:4.83px;font:12.4px/16px 'DejaVu Sans','Liberation Sans',sans-serif;color:#15161a;transform:scaleX(1.300);transform-origin:0 50%;-webkit-text-stroke:.3px #15161a;">Package</span>
</div>
<span class="t" style="left:594.51px;top:403.04px;font:12.4px/16px 'DejaVu Sans','Liberation Sans',sans-serif;color:#15161a;transform:scaleX(1.160);transform-origin:100% 50%;-webkit-text-stroke:.3px #15161a;">1</span>
<span class="t" style="left:672.02px;top:403.04px;font:12.4px/16px 'DejaVu Sans','Liberation Sans',sans-serif;color:#15161a;transform:scaleX(1.160);transform-origin:100% 50%;-webkit-text-stroke:.3px #15161a;">19</span>
<span class="t" style="left:757.62px;top:403.04px;font:12.4px/16px 'DejaVu Sans','Liberation Sans',sans-serif;color:#15161a;transform:scaleX(1.160);transform-origin:100% 50%;-webkit-text-stroke:.3px #15161a;">18</span>
<span class="t" style="left:843.22px;top:403.04px;font:12.4px/16px 'DejaVu Sans','Liberation Sans',sans-serif;color:#15161a;transform:scaleX(1.160);transform-origin:100% 50%;-webkit-text-stroke:.3px #15161a;">11</span>
<span class="t" style="left:928.62px;top:403.04px;font:12.4px/16px 'DejaVu Sans','Liberation Sans',sans-serif;color:#15161a;transform:scaleX(1.160);transform-origin:100% 50%;-webkit-text-stroke:.3px #15161a;">22</span>
<div style="left:0px;top:441px;width:34px;height:1px;background:#a9bbd5;"></div>
<div style="left:34px;top:441px;width:930px;height:1px;background:#d5d9e1;"></div>
<span class="t" style="left:8.61px;top:424.73px;font:12.4px/16px 'DejaVu Sans','Liberation Sans',sans-serif;color:#2c3444;transform:scaleX(1.160);transform-origin:50% 50%;-webkit-text-stroke:.25px #2c3444;">11</span>
<div style="left:35px;top:419.9px;width:75.4px;height:21.69px;overflow:hidden">
<span class="t" style="left:2.70px;top:4.83px;font:12.4px/16px 'DejaVu Sans','Liberation Sans',sans-serif;color:#15161a;transform:scaleX(1.300);transform-origin:0 50%;-webkit-text-stroke:.3px #15161a;">Chennai</span>
</div>
<span class="t" style="left:136.66px;top:424.73px;font:12.4px/16px 'DejaVu Sans','Liberation Sans',sans-serif;color:#15161a;transform:scaleX(1.160);transform-origin:100% 50%;-webkit-text-stroke:.3px #15161a;">600112</span>
<div style="left:188.6px;top:419.9px;width:84.2px;height:21.69px;overflow:hidden">
<span class="t" style="left:2.70px;top:4.83px;font:12.4px/16px 'DejaVu Sans','Liberation Sans',sans-serif;color:#15161a;transform:scaleX(1.300);transform-origin:0 50%;-webkit-text-stroke:.3px #15161a;">Prepay</span>
</div>
<span class="t" style="left:338.11px;top:424.73px;font:12.4px/16px 'DejaVu Sans','Liberation Sans',sans-serif;color:#15161a;transform:scaleX(1.160);transform-origin:100% 50%;-webkit-text-stroke:.3px #15161a;">0</span>
<div style="left:350.6px;top:419.9px;width:83.8px;height:21.69px;overflow:hidden">
<span class="t" style="left:2.70px;top:4.83px;font:12.4px/16px 'DejaVu Sans','Liberation Sans',sans-serif;color:#15161a;transform:scaleX(1.300);transform-origin:0 50%;-webkit-text-stroke:.3px #15161a;">delivery</span>
</div>
<div style="left:436px;top:419.9px;width:84px;height:21.69px;overflow:hidden">
<span class="t" style="left:2.70px;top:4.83px;font:12.4px/16px 'DejaVu Sans','Liberation Sans',sans-serif;color:#15161a;transform:scaleX(1.300);transform-origin:0 50%;-webkit-text-stroke:.3px #15161a;">Package</span>
</div>
<span class="t" style="left:594.51px;top:424.73px;font:12.4px/16px 'DejaVu Sans','Liberation Sans',sans-serif;color:#15161a;transform:scaleX(1.160);transform-origin:100% 50%;-webkit-text-stroke:.3px #15161a;">1</span>
<span class="t" style="left:672.02px;top:424.73px;font:12.4px/16px 'DejaVu Sans','Liberation Sans',sans-serif;color:#15161a;transform:scaleX(1.160);transform-origin:100% 50%;-webkit-text-stroke:.3px #15161a;">20</span>
<span class="t" style="left:757.62px;top:424.73px;font:12.4px/16px 'DejaVu Sans','Liberation Sans',sans-serif;color:#15161a;transform:scaleX(1.160);transform-origin:100% 50%;-webkit-text-stroke:.3px #15161a;">15</span>
<span class="t" style="left:843.22px;top:424.73px;font:12.4px/16px 'DejaVu Sans','Liberation Sans',sans-serif;color:#15161a;transform:scaleX(1.160);transform-origin:100% 50%;-webkit-text-stroke:.3px #15161a;">18</span>
<span class="t" style="left:928.62px;top:424.73px;font:12.4px/16px 'DejaVu Sans','Liberation Sans',sans-serif;color:#15161a;transform:scaleX(1.160);transform-origin:100% 50%;-webkit-text-stroke:.3px #15161a;">25</span>
<div style="left:0px;top:462px;width:34px;height:1px;background:#a9bbd5;"></div>
<div style="left:34px;top:462px;width:930px;height:1px;background:#d5d9e1;"></div>
<span class="t" style="left:8.61px;top:446.42px;font:12.4px/16px 'DejaVu Sans','Liberation Sans',sans-serif;color:#2c3444;transform:scaleX(1.160);transform-origin:50% 50%;-webkit-text-stroke:.25px #2c3444;">12</span>
<div style="left:35px;top:441.59px;width:75.4px;height:21.69px;overflow:hidden">
<span class="t" style="left:2.70px;top:4.83px;font:12.4px/16px 'DejaVu Sans','Liberation Sans',sans-serif;color:#15161a;transform:scaleX(1.300);transform-origin:0 50%;-webkit-text-stroke:.3px #15161a;">Chennai</span>
</div>
<span class="t" style="left:136.66px;top:446.42px;font:12.4px/16px 'DejaVu Sans','Liberation Sans',sans-serif;color:#15161a;transform:scaleX(1.160);transform-origin:100% 50%;-webkit-text-stroke:.3px #15161a;">600012</span>
<div style="left:188.6px;top:441.59px;width:84.2px;height:21.69px;overflow:hidden">
<span class="t" style="left:2.70px;top:4.83px;font:12.4px/16px 'DejaVu Sans','Liberation Sans',sans-serif;color:#15161a;transform:scaleX(1.300);transform-origin:0 50%;-webkit-text-stroke:.3px #15161a;">Prepay</span>
</div>
<span class="t" style="left:338.11px;top:446.42px;font:12.4px/16px 'DejaVu Sans','Liberation Sans',sans-serif;color:#15161a;transform:scaleX(1.160);transform-origin:100% 50%;-webkit-text-stroke:.3px #15161a;">0</span>
<div style="left:350.6px;top:441.59px;width:83.8px;height:21.69px;overflow:hidden">
<span class="t" style="left:2.70px;top:4.83px;font:12.4px/16px 'DejaVu Sans','Liberation Sans',sans-serif;color:#15161a;transform:scaleX(1.300);transform-origin:0 50%;-webkit-text-stroke:.3px #15161a;">delivery</span>
</div>
<div style="left:436px;top:441.59px;width:84px;height:21.69px;overflow:hidden">
<span class="t" style="left:2.70px;top:4.83px;font:12.4px/16px 'DejaVu Sans','Liberation Sans',sans-serif;color:#15161a;transform:scaleX(1.300);transform-origin:0 50%;-webkit-text-stroke:.3px #15161a;">Package</span>
</div>
<span class="t" style="left:594.51px;top:446.42px;font:12.4px/16px 'DejaVu Sans','Liberation Sans',sans-serif;color:#15161a;transform:scaleX(1.160);transform-origin:100% 50%;-webkit-text-stroke:.3px #15161a;">1</span>
<span class="t" style="left:672.02px;top:446.42px;font:12.4px/16px 'DejaVu Sans','Liberation Sans',sans-serif;color:#15161a;transform:scaleX(1.160);transform-origin:100% 50%;-webkit-text-stroke:.3px #15161a;">20</span>
<span class="t" style="left:757.62px;top:446.42px;font:12.4px/16px 'DejaVu Sans','Liberation Sans',sans-serif;color:#15161a;transform:scaleX(1.160);transform-origin:100% 50%;-webkit-text-stroke:.3px #15161a;">15</span>
<span class="t" style="left:843.22px;top:446.42px;font:12.4px/16px 'DejaVu Sans','Liberation Sans',sans-serif;color:#15161a;transform:scaleX(1.160);transform-origin:100% 50%;-webkit-text-stroke:.3px #15161a;">18</span>
<span class="t" style="left:928.62px;top:446.42px;font:12.4px/16px 'DejaVu Sans','Liberation Sans',sans-serif;color:#15161a;transform:scaleX(1.160);transform-origin:100% 50%;-webkit-text-stroke:.3px #15161a;">25</span>
<div style="left:0px;top:484px;width:34px;height:1px;background:#a9bbd5;"></div>
<div style="left:34px;top:484px;width:930px;height:1px;background:#d5d9e1;"></div>
<span class="t" style="left:8.61px;top:468.11px;font:12.4px/16px 'DejaVu Sans','Liberation Sans',sans-serif;color:#2c3444;transform:scaleX(1.160);transform-origin:50% 50%;-webkit-text-stroke:.25px #2c3444;">13</span>
<div style="left:35px;top:463.28px;width:75.4px;height:21.69px;overflow:hidden">
<span class="t" style="left:2.70px;top:4.83px;font:12.4px/16px 'DejaVu Sans','Liberation Sans',sans-serif;color:#15161a;transform:scaleX(1.300);transform-origin:0 50%;-webkit-text-stroke:.3px #15161a;">Chennai</span>
</div>
<span class="t" style="left:136.66px;top:468.11px;font:12.4px/16px 'DejaVu Sans','Liberation Sans',sans-serif;color:#15161a;transform:scaleX(1.160);transform-origin:100% 50%;-webkit-text-stroke:.3px #15161a;">600012</span>
<div style="left:188.6px;top:463.28px;width:84.2px;height:21.69px;overflow:hidden">
<span class="t" style="left:2.70px;top:4.83px;font:12.4px/16px 'DejaVu Sans','Liberation Sans',sans-serif;color:#15161a;transform:scaleX(1.300);transform-origin:0 50%;-webkit-text-stroke:.3px #15161a;">Prepay</span>
</div>
<span class="t" style="left:338.11px;top:468.11px;font:12.4px/16px 'DejaVu Sans','Liberation Sans',sans-serif;color:#15161a;transform:scaleX(1.160);transform-origin:100% 50%;-webkit-text-stroke:.3px #15161a;">0</span>
<div style="left:350.6px;top:463.28px;width:83.8px;height:21.69px;overflow:hidden">
<span class="t" style="left:2.70px;top:4.83px;font:12.4px/16px 'DejaVu Sans','Liberation Sans',sans-serif;color:#15161a;transform:scaleX(1.300);transform-origin:0 50%;-webkit-text-stroke:.3px #15161a;">delivery</span>
</div>
<div style="left:436px;top:463.28px;width:84px;height:21.69px;overflow:hidden">
<span class="t" style="left:2.70px;top:4.83px;font:12.4px/16px 'DejaVu Sans','Liberation Sans',sans-serif;color:#15161a;transform:scaleX(1.300);transform-origin:0 50%;-webkit-text-stroke:.3px #15161a;">Package</span>
</div>
<span class="t" style="left:594.51px;top:468.11px;font:12.4px/16px 'DejaVu Sans','Liberation Sans',sans-serif;color:#15161a;transform:scaleX(1.160);transform-origin:100% 50%;-webkit-text-stroke:.3px #15161a;">1</span>
<span class="t" style="left:672.02px;top:468.11px;font:12.4px/16px 'DejaVu Sans','Liberation Sans',sans-serif;color:#15161a;transform:scaleX(1.160);transform-origin:100% 50%;-webkit-text-stroke:.3px #15161a;">20</span>
<span class="t" style="left:757.62px;top:468.11px;font:12.4px/16px 'DejaVu Sans','Liberation Sans',sans-serif;color:#15161a;transform:scaleX(1.160);transform-origin:100% 50%;-webkit-text-stroke:.3px #15161a;">15</span>
<span class="t" style="left:843.22px;top:468.11px;font:12.4px/16px 'DejaVu Sans','Liberation Sans',sans-serif;color:#15161a;transform:scaleX(1.160);transform-origin:100% 50%;-webkit-text-stroke:.3px #15161a;">18</span>
<span class="t" style="left:928.62px;top:468.11px;font:12.4px/16px 'DejaVu Sans','Liberation Sans',sans-serif;color:#15161a;transform:scaleX(1.160);transform-origin:100% 50%;-webkit-text-stroke:.3px #15161a;">25</span>
<div style="left:0px;top:506px;width:34px;height:1px;background:#a9bbd5;"></div>
<div style="left:34px;top:506px;width:930px;height:1px;background:#d5d9e1;"></div>
<span class="t" style="left:8.61px;top:489.80px;font:12.4px/16px 'DejaVu Sans','Liberation Sans',sans-serif;color:#2c3444;transform:scaleX(1.160);transform-origin:50% 50%;-webkit-text-stroke:.25px #2c3444;">14</span>
<div style="left:35px;top:484.97px;width:75.4px;height:21.69px;overflow:hidden">
<span class="t" style="left:2.70px;top:4.83px;font:12.4px/16px 'DejaVu Sans','Liberation Sans',sans-serif;color:#15161a;transform:scaleX(1.300);transform-origin:0 50%;-webkit-text-stroke:.3px #15161a;">Chennai</span>
</div>
<span class="t" style="left:136.66px;top:489.80px;font:12.4px/16px 'DejaVu Sans','Liberation Sans',sans-serif;color:#15161a;transform:scaleX(1.160);transform-origin:100% 50%;-webkit-text-stroke:.3px #15161a;">600049</span>
<div style="left:188.6px;top:484.97px;width:84.2px;height:21.69px;overflow:hidden">
<span class="t" style="left:2.70px;top:4.83px;font:12.4px/16px 'DejaVu Sans','Liberation Sans',sans-serif;color:#15161a;transform:scaleX(1.300);transform-origin:0 50%;-webkit-text-stroke:.3px #15161a;">Prepay</span>
</div>
<span class="t" style="left:338.11px;top:489.80px;font:12.4px/16px 'DejaVu Sans','Liberation Sans',sans-serif;color:#15161a;transform:scaleX(1.160);transform-origin:100% 50%;-webkit-text-stroke:.3px #15161a;">0</span>
<div style="left:350.6px;top:484.97px;width:83.8px;height:21.69px;overflow:hidden">
<span class="t" style="left:2.70px;top:4.83px;font:12.4px/16px 'DejaVu Sans','Liberation Sans',sans-serif;color:#15161a;transform:scaleX(1.300);transform-origin:0 50%;-webkit-text-stroke:.3px #15161a;">delivery</span>
</div>
<div style="left:436px;top:484.97px;width:84px;height:21.69px;overflow:hidden">
<span class="t" style="left:2.70px;top:4.83px;font:12.4px/16px 'DejaVu Sans','Liberation Sans',sans-serif;color:#15161a;transform:scaleX(1.300);transform-origin:0 50%;-webkit-text-stroke:.3px #15161a;">Package</span>
</div>
<span class="t" style="left:594.51px;top:489.80px;font:12.4px/16px 'DejaVu Sans','Liberation Sans',sans-serif;color:#15161a;transform:scaleX(1.160);transform-origin:100% 50%;-webkit-text-stroke:.3px #15161a;">1</span>
<span class="t" style="left:672.02px;top:489.80px;font:12.4px/16px 'DejaVu Sans','Liberation Sans',sans-serif;color:#15161a;transform:scaleX(1.160);transform-origin:100% 50%;-webkit-text-stroke:.3px #15161a;">20</span>
<span class="t" style="left:757.62px;top:489.80px;font:12.4px/16px 'DejaVu Sans','Liberation Sans',sans-serif;color:#15161a;transform:scaleX(1.160);transform-origin:100% 50%;-webkit-text-stroke:.3px #15161a;">15</span>
<span class="t" style="left:843.22px;top:489.80px;font:12.4px/16px 'DejaVu Sans','Liberation Sans',sans-serif;color:#15161a;transform:scaleX(1.160);transform-origin:100% 50%;-webkit-text-stroke:.3px #15161a;">18</span>
<span class="t" style="left:928.62px;top:489.80px;font:12.4px/16px 'DejaVu Sans','Liberation Sans',sans-serif;color:#15161a;transform:scaleX(1.160);transform-origin:100% 50%;-webkit-text-stroke:.3px #15161a;">25</span>
<div style="left:0px;top:527px;width:34px;height:1px;background:#a9bbd5;"></div>
<div style="left:34px;top:527px;width:930px;height:1px;background:#d5d9e1;"></div>
<span class="t" style="left:8.61px;top:511.49px;font:12.4px/16px 'DejaVu Sans','Liberation Sans',sans-serif;color:#2c3444;transform:scaleX(1.160);transform-origin:50% 50%;-webkit-text-stroke:.25px #2c3444;">15</span>
<div style="left:35px;top:506.66px;width:75.4px;height:21.69px;overflow:hidden">
<span class="t" style="left:2.70px;top:4.83px;font:12.4px/16px 'DejaVu Sans','Liberation Sans',sans-serif;color:#15161a;transform:scaleX(1.300);transform-origin:0 50%;-webkit-text-stroke:.3px #15161a;">Chennai</span>
</div>
<span class="t" style="left:136.66px;top:511.49px;font:12.4px/16px 'DejaVu Sans','Liberation Sans',sans-serif;color:#15161a;transform:scaleX(1.160);transform-origin:100% 50%;-webkit-text-stroke:.3px #15161a;">600080</span>
<div style="left:188.6px;top:506.66px;width:84.2px;height:21.69px;overflow:hidden">
<span class="t" style="left:2.70px;top:4.83px;font:12.4px/16px 'DejaVu Sans','Liberation Sans',sans-serif;color:#15161a;transform:scaleX(1.300);transform-origin:0 50%;-webkit-text-stroke:.3px #15161a;">Prepay</span>
</div>
<span class="t" style="left:338.11px;top:511.49px;font:12.4px/16px 'DejaVu Sans','Liberation Sans',sans-serif;color:#15161a;transform:scaleX(1.160);transform-origin:100% 50%;-webkit-text-stroke:.3px #15161a;">0</span>
<div style="left:350.6px;top:506.66px;width:83.8px;height:21.69px;overflow:hidden">
<span class="t" style="left:2.70px;top:4.83px;font:12.4px/16px 'DejaVu Sans','Liberation Sans',sans-serif;color:#15161a;transform:scaleX(1.300);transform-origin:0 50%;-webkit-text-stroke:.3px #15161a;">delivery</span>
</div>
<div style="left:436px;top:506.66px;width:84px;height:21.69px;overflow:hidden">
<span class="t" style="left:2.70px;top:4.83px;font:12.4px/16px 'DejaVu Sans','Liberation Sans',sans-serif;color:#15161a;transform:scaleX(1.300);transform-origin:0 50%;-webkit-text-stroke:.3px #15161a;">Package</span>
</div>
<span class="t" style="left:594.51px;top:511.49px;font:12.4px/16px 'DejaVu Sans','Liberation Sans',sans-serif;color:#15161a;transform:scaleX(1.160);transform-origin:100% 50%;-webkit-text-stroke:.3px #15161a;">1</span>
<span class="t" style="left:672.02px;top:511.49px;font:12.4px/16px 'DejaVu Sans','Liberation Sans',sans-serif;color:#15161a;transform:scaleX(1.160);transform-origin:100% 50%;-webkit-text-stroke:.3px #15161a;">20</span>
<span class="t" style="left:757.62px;top:511.49px;font:12.4px/16px 'DejaVu Sans','Liberation Sans',sans-serif;color:#15161a;transform:scaleX(1.160);transform-origin:100% 50%;-webkit-text-stroke:.3px #15161a;">15</span>
<span class="t" style="left:843.22px;top:511.49px;font:12.4px/16px 'DejaVu Sans','Liberation Sans',sans-serif;color:#15161a;transform:scaleX(1.160);transform-origin:100% 50%;-webkit-text-stroke:.3px #15161a;">18</span>
<span class="t" style="left:928.62px;top:511.49px;font:12.4px/16px 'DejaVu Sans','Liberation Sans',sans-serif;color:#15161a;transform:scaleX(1.160);transform-origin:100% 50%;-webkit-text-stroke:.3px #15161a;">25</span>
<div style="left:0px;top:549px;width:34px;height:1px;background:#a9bbd5;"></div>
<div style="left:34px;top:549px;width:930px;height:1px;background:#d5d9e1;"></div>
<span class="t" style="left:8.61px;top:533.18px;font:12.4px/16px 'DejaVu Sans','Liberation Sans',sans-serif;color:#2c3444;transform:scaleX(1.160);transform-origin:50% 50%;-webkit-text-stroke:.25px #2c3444;">16</span>
<div style="left:35px;top:528.35px;width:75.4px;height:21.69px;overflow:hidden">
<span class="t" style="left:2.70px;top:4.83px;font:12.4px/16px 'DejaVu Sans','Liberation Sans',sans-serif;color:#15161a;transform:scaleX(1.300);transform-origin:0 50%;-webkit-text-stroke:.3px #15161a;">Chennai</span>
</div>
<span class="t" style="left:136.66px;top:533.18px;font:12.4px/16px 'DejaVu Sans','Liberation Sans',sans-serif;color:#15161a;transform:scaleX(1.160);transform-origin:100% 50%;-webkit-text-stroke:.3px #15161a;">600032</span>
<div style="left:188.6px;top:528.35px;width:84.2px;height:21.69px;overflow:hidden">
<span class="t" style="left:2.70px;top:4.83px;font:12.4px/16px 'DejaVu Sans','Liberation Sans',sans-serif;color:#15161a;transform:scaleX(1.300);transform-origin:0 50%;-webkit-text-stroke:.3px #15161a;">Prepay</span>
</div>
<span class="t" style="left:338.11px;top:533.18px;font:12.4px/16px 'DejaVu Sans','Liberation Sans',sans-serif;color:#15161a;transform:scaleX(1.160);transform-origin:100% 50%;-webkit-text-stroke:.3px #15161a;">0</span>
<div style="left:350.6px;top:528.35px;width:83.8px;height:21.69px;overflow:hidden">
<span class="t" style="left:2.70px;top:4.83px;font:12.4px/16px 'DejaVu Sans','Liberation Sans',sans-serif;color:#15161a;transform:scaleX(1.300);transform-origin:0 50%;-webkit-text-stroke:.3px #15161a;">delivery</span>
</div>
<div style="left:436px;top:528.35px;width:84px;height:21.69px;overflow:hidden">
<span class="t" style="left:2.70px;top:4.83px;font:12.4px/16px 'DejaVu Sans','Liberation Sans',sans-serif;color:#15161a;transform:scaleX(1.300);transform-origin:0 50%;-webkit-text-stroke:.3px #15161a;">Package</span>
</div>
<span class="t" style="left:594.51px;top:533.18px;font:12.4px/16px 'DejaVu Sans','Liberation Sans',sans-serif;color:#15161a;transform:scaleX(1.160);transform-origin:100% 50%;-webkit-text-stroke:.3px #15161a;">1</span>
<span class="t" style="left:672.02px;top:533.18px;font:12.4px/16px 'DejaVu Sans','Liberation Sans',sans-serif;color:#15161a;transform:scaleX(1.160);transform-origin:100% 50%;-webkit-text-stroke:.3px #15161a;">20</span>
<span class="t" style="left:757.62px;top:533.18px;font:12.4px/16px 'DejaVu Sans','Liberation Sans',sans-serif;color:#15161a;transform:scaleX(1.160);transform-origin:100% 50%;-webkit-text-stroke:.3px #15161a;">15</span>
<span class="t" style="left:843.22px;top:533.18px;font:12.4px/16px 'DejaVu Sans','Liberation Sans',sans-serif;color:#15161a;transform:scaleX(1.160);transform-origin:100% 50%;-webkit-text-stroke:.3px #15161a;">18</span>
<span class="t" style="left:928.62px;top:533.18px;font:12.4px/16px 'DejaVu Sans','Liberation Sans',sans-serif;color:#15161a;transform:scaleX(1.160);transform-origin:100% 50%;-webkit-text-stroke:.3px #15161a;">25</span>
<div style="left:0px;top:571px;width:34px;height:1px;background:#a9bbd5;"></div>
<div style="left:34px;top:571px;width:930px;height:1px;background:#d5d9e1;"></div>
<span class="t" style="left:8.61px;top:554.87px;font:12.4px/16px 'DejaVu Sans','Liberation Sans',sans-serif;color:#2c3444;transform:scaleX(1.160);transform-origin:50% 50%;-webkit-text-stroke:.25px #2c3444;">17</span>
<div style="left:35px;top:550.04px;width:75.4px;height:21.69px;overflow:hidden">
<span class="t" style="left:2.70px;top:4.83px;font:12.4px/16px 'DejaVu Sans','Liberation Sans',sans-serif;color:#15161a;transform:scaleX(1.300);transform-origin:0 50%;-webkit-text-stroke:.3px #15161a;">Chennai</span>
</div>
<span class="t" style="left:136.66px;top:554.87px;font:12.4px/16px 'DejaVu Sans','Liberation Sans',sans-serif;color:#15161a;transform:scaleX(1.160);transform-origin:100% 50%;-webkit-text-stroke:.3px #15161a;">602301</span>
<div style="left:188.6px;top:550.04px;width:84.2px;height:21.69px;overflow:hidden">
<span class="t" style="left:2.70px;top:4.83px;font:12.4px/16px 'DejaVu Sans','Liberation Sans',sans-serif;color:#15161a;transform:scaleX(1.300);transform-origin:0 50%;-webkit-text-stroke:.3px #15161a;">Prepay</span>
</div>
<span class="t" style="left:338.11px;top:554.87px;font:12.4px/16px 'DejaVu Sans','Liberation Sans',sans-serif;color:#15161a;transform:scaleX(1.160);transform-origin:100% 50%;-webkit-text-stroke:.3px #15161a;">0</span>
<div style="left:350.6px;top:550.04px;width:83.8px;height:21.69px;overflow:hidden">
<span class="t" style="left:2.70px;top:4.83px;font:12.4px/16px 'DejaVu Sans','Liberation Sans',sans-serif;color:#15161a;transform:scaleX(1.300);transform-origin:0 50%;-webkit-text-stroke:.3px #15161a;">delivery</span>
</div>
<div style="left:436px;top:550.04px;width:84px;height:21.69px;overflow:hidden">
<span class="t" style="left:2.70px;top:4.83px;font:12.4px/16px 'DejaVu Sans','Liberation Sans',sans-serif;color:#15161a;transform:scaleX(1.300);transform-origin:0 50%;-webkit-text-stroke:.3px #15161a;">Package</span>
</div>
<span class="t" style="left:594.51px;top:554.87px;font:12.4px/16px 'DejaVu Sans','Liberation Sans',sans-serif;color:#15161a;transform:scaleX(1.160);transform-origin:100% 50%;-webkit-text-stroke:.3px #15161a;">1</span>
<span class="t" style="left:672.02px;top:554.87px;font:12.4px/16px 'DejaVu Sans','Liberation Sans',sans-serif;color:#15161a;transform:scaleX(1.160);transform-origin:100% 50%;-webkit-text-stroke:.3px #15161a;">20</span>
<span class="t" style="left:757.62px;top:554.87px;font:12.4px/16px 'DejaVu Sans','Liberation Sans',sans-serif;color:#15161a;transform:scaleX(1.160);transform-origin:100% 50%;-webkit-text-stroke:.3px #15161a;">15</span>
<span class="t" style="left:843.22px;top:554.87px;font:12.4px/16px 'DejaVu Sans','Liberation Sans',sans-serif;color:#15161a;transform:scaleX(1.160);transform-origin:100% 50%;-webkit-text-stroke:.3px #15161a;">18</span>
<span class="t" style="left:928.62px;top:554.87px;font:12.4px/16px 'DejaVu Sans','Liberation Sans',sans-serif;color:#15161a;transform:scaleX(1.160);transform-origin:100% 50%;-webkit-text-stroke:.3px #15161a;">25</span>
<div style="left:0px;top:592px;width:34px;height:1px;background:#a9bbd5;"></div>
<div style="left:34px;top:592px;width:930px;height:1px;background:#d5d9e1;"></div>
<span class="t" style="left:8.61px;top:576.56px;font:12.4px/16px 'DejaVu Sans','Liberation Sans',sans-serif;color:#2c3444;transform:scaleX(1.160);transform-origin:50% 50%;-webkit-text-stroke:.25px #2c3444;">18</span>
<div style="left:0px;top:614px;width:34px;height:1px;background:#a9bbd5;"></div>
<div style="left:34px;top:614px;width:930px;height:1px;background:#d5d9e1;"></div>
<div style="left:110px;top:203px;width:1px;height:393px;background:#d5d9e1;"></div>
<div style="left:187px;top:203px;width:1px;height:393px;background:#d5d9e1;"></div>
<div style="left:272px;top:203px;width:1px;height:393px;background:#d5d9e1;"></div>
<div style="left:349px;top:203px;width:1px;height:393px;background:#d5d9e1;"></div>
<div style="left:434px;top:203px;width:1px;height:393px;background:#d5d9e1;"></div>
<div style="left:520px;top:203px;width:1px;height:393px;background:#d5d9e1;"></div>
<div style="left:605px;top:203px;width:1px;height:393px;background:#d5d9e1;"></div>
<div style="left:690px;top:203px;width:1px;height:393px;background:#d5d9e1;"></div>
<div style="left:776px;top:203px;width:1px;height:393px;background:#d5d9e1;"></div>
<div style="left:862px;top:203px;width:1px;height:393px;background:#d5d9e1;"></div>
<div style="left:947px;top:203px;width:1px;height:393px;background:#d5d9e1;"></div>
</div>
</body></html>
